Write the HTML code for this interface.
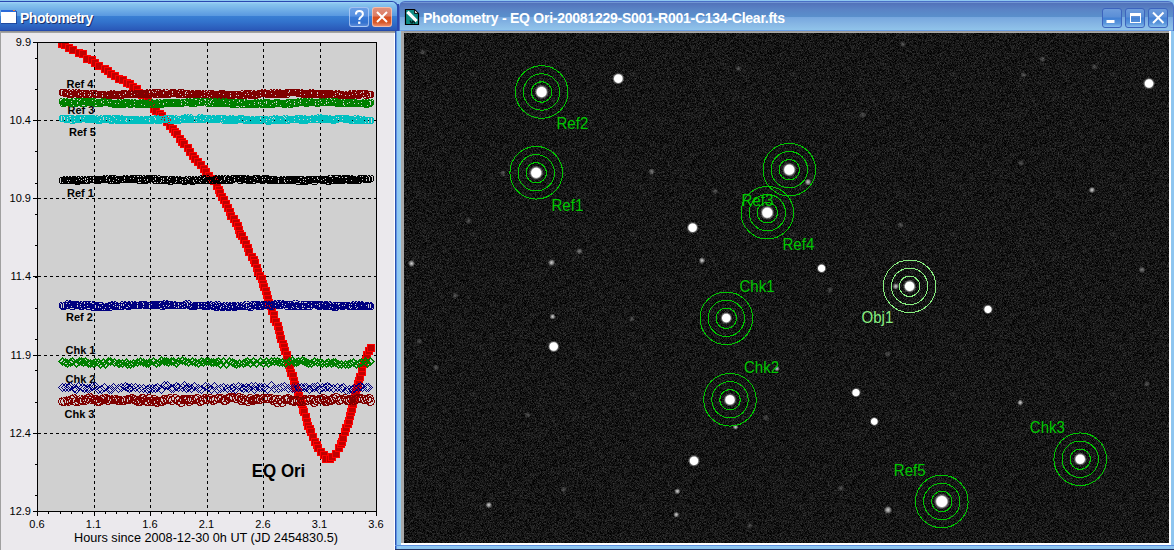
<!DOCTYPE html>
<html><head><meta charset="utf-8"><style>
html,body{margin:0;padding:0;}
body{width:1174px;height:550px;position:relative;overflow:hidden;background:#8ec8f0;font-family:"Liberation Sans",sans-serif;}
.abs{position:absolute;}
#rwin{left:395px;top:0;width:779px;height:550px;}
#rtitle{left:399px;top:1px;width:775px;height:30px;border-radius:6px 6px 0 0;box-sizing:border-box;border:1px solid #4a6ec6;border-bottom:none;
 background:linear-gradient(#90b8e8 0px,#5272ba 1px,#5a84c6 8px,#5a90cc 15px,#76a6de 15px,#86b6e4 22px,#90c4ea 28px,#6aa0e8 28px);}
#rborderL{left:395px;top:31px;width:6px;height:519px;background:linear-gradient(90deg,#2a52b0 0,#2a52b0 1px,#5f92e2 1px,#5f92e2 2px,#8ec6f0 2px,#94cdf2 6px);}
#ltitle{left:0;top:1px;width:398px;height:30px;border-radius:0 6px 0 0;box-sizing:border-box;border-top:1px solid #2a48b0;border-right:1px solid #2a48b0;
 background:linear-gradient(#a0d4f8 0px,#88c4ee 2px,#5898e0 14px,#3a80d4 14px,#3272cc 20px,#2a58b8 28px,#1e3ca0 29px);}
#lclient{left:0;top:31px;width:395px;height:519px;background:#ebe9ed;}
svg{position:absolute;left:0;top:0;}
.tb{position:absolute;width:20px;height:20px;box-sizing:border-box;border-radius:3px;}
</style></head><body>
<div id="rwin" class="abs" style="background:#8ec6f0"></div>
<div id="rtitle" class="abs"></div>
<div id="rborderL" class="abs"></div>
<div class="abs" style="left:401px;top:31px;width:768px;height:2px;background:linear-gradient(#909090,#b0b0b0)"></div>
<div class="abs" style="left:401px;top:31px;width:3px;height:512px;background:#a8a8a8"></div>
<div class="abs" style="left:1169px;top:31px;width:2px;height:514px;background:#fff"></div>
<div class="abs" style="left:1171px;top:31px;width:3px;height:519px;background:#8ec6f0"></div>
<div class="abs" style="left:401px;top:543px;width:770px;height:2px;background:#fff"></div>
<div class="abs" style="left:395px;top:545px;width:779px;height:1px;background:#5f92e2"></div>
<div class="abs" style="left:395px;top:549px;width:779px;height:1px;background:#203060"></div>
<div id="ltitle" class="abs"></div>
<div class="abs" style="left:397px;top:4px;width:2px;height:27px;background:#2a48b0"></div>
<div id="lclient" class="abs"></div>
<div class="abs" style="left:0;top:31px;width:395px;height:2px;background:linear-gradient(#8c8c8c,#acacac)"></div>
<div class="abs" style="left:0;top:31px;width:1px;height:519px;background:#a0a0a0"></div>
<div class="abs" style="left:394px;top:33px;width:1px;height:517px;background:#fff"></div>
<svg width="1174" height="550" viewBox="0 0 1174 550">
<defs><clipPath id="pc"><rect x="38" y="43" width="338" height="468"/></clipPath></defs>
<rect x="37.5" y="42.5" width="339" height="469" fill="#d0d0d0" stroke="#000" stroke-width="1" shape-rendering="crispEdges"/>
<path d="M94.5 43V511M150.5 43V511M207.5 43V511M263.5 43V511M320.5 43V511M38 120.5H376M38 198.5H376M38 276.5H376M38 355.5H376M38 433.5H376" stroke="#000" stroke-width="1" stroke-dasharray="3,3" fill="none"/>
<path d="M37.5 511v5M48.5 511v3M60.5 511v3M71.5 511v3M82.5 511v3M94.5 511v5M105.5 511v3M116.5 511v3M127.5 511v3M139.5 511v3M150.5 511v5M161.5 511v3M173.5 511v3M184.5 511v3M195.5 511v3M207.5 511v5M218.5 511v3M229.5 511v3M240.5 511v3M252.5 511v3M263.5 511v5M274.5 511v3M286.5 511v3M297.5 511v3M308.5 511v3M320.5 511v5M331.5 511v3M342.5 511v3M353.5 511v3M365.5 511v3M376.5 511v5M37 58.5h-2M37 89.5h-2M37 120.5h-2M37 151.5h-2M37 183.5h-2M37 214.5h-2M37 245.5h-2M37 277.5h-2M37 308.5h-2M37 339.5h-2M37 370.5h-2M37 402.5h-2M37 433.5h-2M37 464.5h-2M37 495.5h-2M37 42.5h-4M37 120.5h-4M37 198.5h-4M37 276.5h-4M37 355.5h-4M37 433.5h-4M37 511.5h-4" stroke="#000" stroke-width="1" fill="none"/>
<g font-family="Liberation Sans" font-size="11" fill="#000"><text x="31" y="46" text-anchor="end">9.9</text><text x="31" y="124" text-anchor="end">10.4</text><text x="31" y="202" text-anchor="end">10.9</text><text x="31" y="280" text-anchor="end">11.4</text><text x="31" y="359" text-anchor="end">11.9</text><text x="31" y="437" text-anchor="end">12.4</text><text x="31" y="515" text-anchor="end">12.9</text><text x="37" y="528" text-anchor="middle">0.6</text><text x="93.5" y="528" text-anchor="middle">1.1</text><text x="150" y="528" text-anchor="middle">1.6</text><text x="206.5" y="528" text-anchor="middle">2.1</text><text x="263" y="528" text-anchor="middle">2.6</text><text x="319.5" y="528" text-anchor="middle">3.1</text><text x="376" y="528" text-anchor="middle">3.6</text></g>
<text x="74" y="542" font-family="Liberation Sans" font-size="12" fill="#000" textLength="264" lengthAdjust="spacingAndGlyphs">Hours since 2008-12-30 0h UT (JD 2454830.5)</text>
<g font-family="Liberation Sans" font-weight="bold" font-size="11" fill="#000"><text x="66.5" y="88">Ref 4</text><text x="67.5" y="114">Ref 3</text><text x="69" y="136">Ref 5</text><text x="67" y="197">Ref 1</text><text x="66" y="321">Ref 2</text><text x="65.5" y="354">Chk 1</text><text x="65.5" y="383">Chk 2</text><text x="64.5" y="418">Chk 3</text></g>
<g stroke="#ff0000" stroke-width="1" fill="#c00000" clip-path="url(#pc)" shape-rendering="crispEdges"><rect x="58.5" y="40.5" width="7" height="7"/><rect x="61.5" y="41.5" width="7" height="7"/><rect x="65.5" y="44.5" width="7" height="7"/><rect x="69.5" y="46.5" width="7" height="7"/><rect x="75.5" y="49.5" width="7" height="7"/><rect x="79.5" y="50.5" width="7" height="7"/><rect x="83.5" y="55.5" width="7" height="7"/><rect x="88.5" y="56.5" width="7" height="7"/><rect x="91.5" y="59.5" width="7" height="7"/><rect x="95.5" y="62.5" width="7" height="7"/><rect x="101.5" y="65.5" width="7" height="7"/><rect x="104.5" y="67.5" width="7" height="7"/><rect x="107.5" y="70.5" width="7" height="7"/><rect x="111.5" y="72.5" width="7" height="7"/><rect x="115.5" y="75.5" width="7" height="7"/><rect x="119.5" y="76.5" width="7" height="7"/><rect x="123.5" y="79.5" width="7" height="7"/><rect x="126.5" y="80.5" width="7" height="7"/><rect x="129.5" y="83.5" width="7" height="7"/><rect x="133.5" y="85.5" width="7" height="7"/><rect x="135.5" y="89.5" width="7" height="7"/><rect x="138.5" y="91.5" width="7" height="7"/><rect x="142.5" y="94.5" width="7" height="7"/><rect x="144.5" y="97.5" width="7" height="7"/><rect x="148.5" y="100.5" width="7" height="7"/><rect x="150.5" y="105.5" width="7" height="7"/><rect x="152.5" y="107.5" width="7" height="7"/><rect x="156.5" y="110.5" width="7" height="7"/><rect x="158.5" y="112.5" width="7" height="7"/><rect x="160.5" y="115.5" width="7" height="7"/><rect x="163.5" y="118.5" width="7" height="7"/><rect x="166.5" y="122.5" width="7" height="7"/><rect x="169.5" y="125.5" width="7" height="7"/><rect x="171.5" y="128.5" width="7" height="7"/><rect x="173.5" y="130.5" width="7" height="7"/><rect x="176.5" y="135.5" width="7" height="7"/><rect x="178.5" y="138.5" width="7" height="7"/><rect x="180.5" y="140.5" width="7" height="7"/><rect x="184.5" y="144.5" width="7" height="7"/><rect x="186.5" y="148.5" width="7" height="7"/><rect x="189.5" y="152.5" width="7" height="7"/><rect x="191.5" y="155.5" width="7" height="7"/><rect x="194.5" y="158.5" width="7" height="7"/><rect x="197.5" y="161.5" width="7" height="7"/><rect x="200.5" y="165.5" width="7" height="7"/><rect x="202.5" y="168.5" width="7" height="7"/><rect x="205.5" y="172.5" width="7" height="7"/><rect x="208.5" y="175.5" width="7" height="7"/><rect x="210.5" y="177.5" width="7" height="7"/><rect x="213.5" y="182.5" width="7" height="7"/><rect x="215.5" y="186.5" width="7" height="7"/><rect x="216.5" y="189.5" width="7" height="7"/><rect x="218.5" y="193.5" width="7" height="7"/><rect x="220.5" y="196.5" width="7" height="7"/><rect x="222.5" y="200.5" width="7" height="7"/><rect x="224.5" y="204.5" width="7" height="7"/><rect x="226.5" y="208.5" width="7" height="7"/><rect x="227.5" y="212.5" width="7" height="7"/><rect x="230.5" y="215.5" width="7" height="7"/><rect x="232.5" y="219.5" width="7" height="7"/><rect x="234.5" y="222.5" width="7" height="7"/><rect x="235.5" y="226.5" width="7" height="7"/><rect x="236.5" y="230.5" width="7" height="7"/><rect x="238.5" y="232.5" width="7" height="7"/><rect x="240.5" y="236.5" width="7" height="7"/><rect x="242.5" y="240.5" width="7" height="7"/><rect x="244.5" y="244.5" width="7" height="7"/><rect x="245.5" y="248.5" width="7" height="7"/><rect x="248.5" y="253.5" width="7" height="7"/><rect x="250.5" y="256.5" width="7" height="7"/><rect x="251.5" y="259.5" width="7" height="7"/><rect x="253.5" y="264.5" width="7" height="7"/><rect x="254.5" y="268.5" width="7" height="7"/><rect x="256.5" y="272.5" width="7" height="7"/><rect x="258.5" y="275.5" width="7" height="7"/><rect x="259.5" y="280.5" width="7" height="7"/><rect x="260.5" y="283.5" width="7" height="7"/><rect x="262.5" y="287.5" width="7" height="7"/><rect x="263.5" y="291.5" width="7" height="7"/><rect x="264.5" y="295.5" width="7" height="7"/><rect x="265.5" y="299.5" width="7" height="7"/><rect x="267.5" y="302.5" width="7" height="7"/><rect x="268.5" y="307.5" width="7" height="7"/><rect x="270.5" y="311.5" width="7" height="7"/><rect x="270.5" y="315.5" width="7" height="7"/><rect x="272.5" y="318.5" width="7" height="7"/><rect x="274.5" y="322.5" width="7" height="7"/><rect x="275.5" y="326.5" width="7" height="7"/><rect x="276.5" y="331.5" width="7" height="7"/><rect x="277.5" y="335.5" width="7" height="7"/><rect x="279.5" y="340.5" width="7" height="7"/><rect x="280.5" y="343.5" width="7" height="7"/><rect x="281.5" y="347.5" width="7" height="7"/><rect x="283.5" y="351.5" width="7" height="7"/><rect x="283.5" y="355.5" width="7" height="7"/><rect x="285.5" y="361.5" width="7" height="7"/><rect x="286.5" y="364.5" width="7" height="7"/><rect x="287.5" y="369.5" width="7" height="7"/><rect x="289.5" y="372.5" width="7" height="7"/><rect x="290.5" y="377.5" width="7" height="7"/><rect x="291.5" y="381.5" width="7" height="7"/><rect x="292.5" y="384.5" width="7" height="7"/><rect x="294.5" y="388.5" width="7" height="7"/><rect x="295.5" y="392.5" width="7" height="7"/><rect x="297.5" y="396.5" width="7" height="7"/><rect x="298.5" y="400.5" width="7" height="7"/><rect x="299.5" y="406.5" width="7" height="7"/><rect x="300.5" y="408.5" width="7" height="7"/><rect x="302.5" y="413.5" width="7" height="7"/><rect x="303.5" y="418.5" width="7" height="7"/><rect x="304.5" y="422.5" width="7" height="7"/><rect x="306.5" y="425.5" width="7" height="7"/><rect x="307.5" y="428.5" width="7" height="7"/><rect x="309.5" y="433.5" width="7" height="7"/><rect x="311.5" y="438.5" width="7" height="7"/><rect x="313.5" y="441.5" width="7" height="7"/><rect x="314.5" y="444.5" width="7" height="7"/><rect x="317.5" y="448.5" width="7" height="7"/><rect x="320.5" y="451.5" width="7" height="7"/><rect x="322.5" y="455.5" width="7" height="7"/><rect x="326.5" y="455.5" width="7" height="7"/><rect x="328.5" y="453.5" width="7" height="7"/><rect x="332.5" y="450.5" width="7" height="7"/><rect x="335.5" y="444.5" width="7" height="7"/><rect x="337.5" y="440.5" width="7" height="7"/><rect x="338.5" y="438.5" width="7" height="7"/><rect x="339.5" y="434.5" width="7" height="7"/><rect x="341.5" y="428.5" width="7" height="7"/><rect x="342.5" y="424.5" width="7" height="7"/><rect x="344.5" y="420.5" width="7" height="7"/><rect x="345.5" y="417.5" width="7" height="7"/><rect x="346.5" y="412.5" width="7" height="7"/><rect x="347.5" y="408.5" width="7" height="7"/><rect x="348.5" y="405.5" width="7" height="7"/><rect x="349.5" y="400.5" width="7" height="7"/><rect x="350.5" y="396.5" width="7" height="7"/><rect x="351.5" y="393.5" width="7" height="7"/><rect x="352.5" y="389.5" width="7" height="7"/><rect x="353.5" y="384.5" width="7" height="7"/><rect x="354.5" y="380.5" width="7" height="7"/><rect x="355.5" y="377.5" width="7" height="7"/><rect x="356.5" y="373.5" width="7" height="7"/><rect x="358.5" y="368.5" width="7" height="7"/><rect x="358.5" y="364.5" width="7" height="7"/><rect x="360.5" y="360.5" width="7" height="7"/><rect x="362.5" y="356.5" width="7" height="7"/><rect x="363.5" y="351.5" width="7" height="7"/><rect x="365.5" y="347.5" width="7" height="7"/><rect x="367.5" y="344.5" width="7" height="7"/></g>
<path d="M62.5 89a3.5 3.5 0 1 0 0.1 0M63.5 89a3.5 3.5 0 1 0 0.1 0M65.5 90a3.5 3.5 0 1 0 0.1 0M66.5 90a3.5 3.5 0 1 0 0.1 0M66.5 90a3.5 3.5 0 1 0 0.1 0M67.5 89a3.5 3.5 0 1 0 0.1 0M69.5 91a3.5 3.5 0 1 0 0.1 0M69.5 90a3.5 3.5 0 1 0 0.1 0M71.5 91a3.5 3.5 0 1 0 0.1 0M72.5 90a3.5 3.5 0 1 0 0.1 0M74.5 89a3.5 3.5 0 1 0 0.1 0M76.5 90a3.5 3.5 0 1 0 0.1 0M77.5 89a3.5 3.5 0 1 0 0.1 0M78.5 91a3.5 3.5 0 1 0 0.1 0M79.5 91a3.5 3.5 0 1 0 0.1 0M80.5 90a3.5 3.5 0 1 0 0.1 0M82.5 90a3.5 3.5 0 1 0 0.1 0M82.5 90a3.5 3.5 0 1 0 0.1 0M84.5 90a3.5 3.5 0 1 0 0.1 0M85.5 91a3.5 3.5 0 1 0 0.1 0M86.5 90a3.5 3.5 0 1 0 0.1 0M88.5 91a3.5 3.5 0 1 0 0.1 0M89.5 91a3.5 3.5 0 1 0 0.1 0M90.5 92a3.5 3.5 0 1 0 0.1 0M92.5 90a3.5 3.5 0 1 0 0.1 0M94.5 90a3.5 3.5 0 1 0 0.1 0M95.5 91a3.5 3.5 0 1 0 0.1 0M96.5 91a3.5 3.5 0 1 0 0.1 0M96.5 91a3.5 3.5 0 1 0 0.1 0M98.5 91a3.5 3.5 0 1 0 0.1 0M100.5 91a3.5 3.5 0 1 0 0.1 0M101.5 91a3.5 3.5 0 1 0 0.1 0M103.5 91a3.5 3.5 0 1 0 0.1 0M104.5 92a3.5 3.5 0 1 0 0.1 0M106.5 91a3.5 3.5 0 1 0 0.1 0M106.5 92a3.5 3.5 0 1 0 0.1 0M108.5 92a3.5 3.5 0 1 0 0.1 0M109.5 91a3.5 3.5 0 1 0 0.1 0M111.5 91a3.5 3.5 0 1 0 0.1 0M111.5 91a3.5 3.5 0 1 0 0.1 0M112.5 90a3.5 3.5 0 1 0 0.1 0M113.5 92a3.5 3.5 0 1 0 0.1 0M114.5 91a3.5 3.5 0 1 0 0.1 0M115.5 92a3.5 3.5 0 1 0 0.1 0M116.5 91a3.5 3.5 0 1 0 0.1 0M118.5 92a3.5 3.5 0 1 0 0.1 0M119.5 92a3.5 3.5 0 1 0 0.1 0M120.5 91a3.5 3.5 0 1 0 0.1 0M121.5 92a3.5 3.5 0 1 0 0.1 0M123.5 90a3.5 3.5 0 1 0 0.1 0M124.5 90a3.5 3.5 0 1 0 0.1 0M125.5 91a3.5 3.5 0 1 0 0.1 0M127.5 90a3.5 3.5 0 1 0 0.1 0M127.5 91a3.5 3.5 0 1 0 0.1 0M129.4 91a3.5 3.5 0 1 0 0.1 0M130.4 91a3.5 3.5 0 1 0 0.1 0M132.4 91a3.5 3.5 0 1 0 0.1 0M133.4 90a3.5 3.5 0 1 0 0.1 0M135.4 91a3.5 3.5 0 1 0 0.1 0M137.4 91a3.5 3.5 0 1 0 0.1 0M138.4 90a3.5 3.5 0 1 0 0.1 0M139.4 91a3.5 3.5 0 1 0 0.1 0M139.4 90a3.5 3.5 0 1 0 0.1 0M140.4 90a3.5 3.5 0 1 0 0.1 0M142.4 90a3.5 3.5 0 1 0 0.1 0M142.4 90a3.5 3.5 0 1 0 0.1 0M143.4 90a3.5 3.5 0 1 0 0.1 0M144.4 91a3.5 3.5 0 1 0 0.1 0M145.4 90a3.5 3.5 0 1 0 0.1 0M147.4 90a3.5 3.5 0 1 0 0.1 0M148.4 89a3.5 3.5 0 1 0 0.1 0M149.4 91a3.5 3.5 0 1 0 0.1 0M151.4 90a3.5 3.5 0 1 0 0.1 0M151.4 89a3.5 3.5 0 1 0 0.1 0M153.4 90a3.5 3.5 0 1 0 0.1 0M154.4 89a3.5 3.5 0 1 0 0.1 0M155.4 91a3.5 3.5 0 1 0 0.1 0M156.4 89a3.5 3.5 0 1 0 0.1 0M158.4 89a3.5 3.5 0 1 0 0.1 0M159.4 91a3.5 3.5 0 1 0 0.1 0M161.4 90a3.5 3.5 0 1 0 0.1 0M162.4 90a3.5 3.5 0 1 0 0.1 0M163.4 91a3.5 3.5 0 1 0 0.1 0M164.4 91a3.5 3.5 0 1 0 0.1 0M165.4 89a3.5 3.5 0 1 0 0.1 0M167.4 91a3.5 3.5 0 1 0 0.1 0M168.4 91a3.5 3.5 0 1 0 0.1 0M170.4 90a3.5 3.5 0 1 0 0.1 0M171.4 90a3.5 3.5 0 1 0 0.1 0M172.4 89a3.5 3.5 0 1 0 0.1 0M173.4 89a3.5 3.5 0 1 0 0.1 0M174.4 90a3.5 3.5 0 1 0 0.1 0M176.4 90a3.5 3.5 0 1 0 0.1 0M178.4 91a3.5 3.5 0 1 0 0.1 0M179.4 90a3.5 3.5 0 1 0 0.1 0M180.4 89a3.5 3.5 0 1 0 0.1 0M181.4 89a3.5 3.5 0 1 0 0.1 0M183.4 91a3.5 3.5 0 1 0 0.1 0M185.4 90a3.5 3.5 0 1 0 0.1 0M186.4 91a3.5 3.5 0 1 0 0.1 0M187.4 90a3.5 3.5 0 1 0 0.1 0M189.4 91a3.5 3.5 0 1 0 0.1 0M190.4 90a3.5 3.5 0 1 0 0.1 0M191.4 91a3.5 3.5 0 1 0 0.1 0M192.4 91a3.5 3.5 0 1 0 0.1 0M194.4 90a3.5 3.5 0 1 0 0.1 0M195.4 91a3.5 3.5 0 1 0 0.1 0M197.4 90a3.5 3.5 0 1 0 0.1 0M198.4 90a3.5 3.5 0 1 0 0.1 0M199.4 91a3.5 3.5 0 1 0 0.1 0M200.4 91a3.5 3.5 0 1 0 0.1 0M202.4 91a3.5 3.5 0 1 0 0.1 0M203.4 91a3.5 3.5 0 1 0 0.1 0M204.4 90a3.5 3.5 0 1 0 0.1 0M206.4 91a3.5 3.5 0 1 0 0.1 0M207.4 92a3.5 3.5 0 1 0 0.1 0M209.4 92a3.5 3.5 0 1 0 0.1 0M210.4 90a3.5 3.5 0 1 0 0.1 0M211.4 90a3.5 3.5 0 1 0 0.1 0M212.4 91a3.5 3.5 0 1 0 0.1 0M213.4 91a3.5 3.5 0 1 0 0.1 0M214.4 92a3.5 3.5 0 1 0 0.1 0M215.4 91a3.5 3.5 0 1 0 0.1 0M217.4 92a3.5 3.5 0 1 0 0.1 0M218.4 92a3.5 3.5 0 1 0 0.1 0M219.4 91a3.5 3.5 0 1 0 0.1 0M221.4 90a3.5 3.5 0 1 0 0.1 0M222.4 90a3.5 3.5 0 1 0 0.1 0M223.4 92a3.5 3.5 0 1 0 0.1 0M224.4 91a3.5 3.5 0 1 0 0.1 0M225.4 91a3.5 3.5 0 1 0 0.1 0M226.4 91a3.5 3.5 0 1 0 0.1 0M228.4 92a3.5 3.5 0 1 0 0.1 0M228.4 91a3.5 3.5 0 1 0 0.1 0M229.4 91a3.5 3.5 0 1 0 0.1 0M231.4 91a3.5 3.5 0 1 0 0.1 0M232.4 92a3.5 3.5 0 1 0 0.1 0M234.4 91a3.5 3.5 0 1 0 0.1 0M236.4 91a3.5 3.5 0 1 0 0.1 0M237.4 91a3.5 3.5 0 1 0 0.1 0M238.4 91a3.5 3.5 0 1 0 0.1 0M239.4 92a3.5 3.5 0 1 0 0.1 0M241.4 92a3.5 3.5 0 1 0 0.1 0M243.4 90a3.5 3.5 0 1 0 0.1 0M244.4 92a3.5 3.5 0 1 0 0.1 0M246.4 90a3.5 3.5 0 1 0 0.1 0M247.4 91a3.5 3.5 0 1 0 0.1 0M247.4 90a3.5 3.5 0 1 0 0.1 0M248.4 91a3.5 3.5 0 1 0 0.1 0M250.4 92a3.5 3.5 0 1 0 0.1 0M251.4 91a3.5 3.5 0 1 0 0.1 0M252.4 90a3.5 3.5 0 1 0 0.1 0M254.4 92a3.5 3.5 0 1 0 0.1 0M255.4 92a3.5 3.5 0 1 0 0.1 0M256.4 91a3.5 3.5 0 1 0 0.1 0M258.4 91a3.5 3.5 0 1 0 0.1 0M259.4 90a3.5 3.5 0 1 0 0.1 0M260.4 90a3.5 3.5 0 1 0 0.1 0M261.4 90a3.5 3.5 0 1 0 0.1 0M263.4 89a3.5 3.5 0 1 0 0.1 0M264.4 90a3.5 3.5 0 1 0 0.1 0M265.4 90a3.5 3.5 0 1 0 0.1 0M266.4 90a3.5 3.5 0 1 0 0.1 0M267.4 91a3.5 3.5 0 1 0 0.1 0M269.4 91a3.5 3.5 0 1 0 0.1 0M270.4 90a3.5 3.5 0 1 0 0.1 0M271.4 91a3.5 3.5 0 1 0 0.1 0M272.4 89a3.5 3.5 0 1 0 0.1 0M273.4 91a3.5 3.5 0 1 0 0.1 0M274.4 90a3.5 3.5 0 1 0 0.1 0M275.4 91a3.5 3.5 0 1 0 0.1 0M277.4 90a3.5 3.5 0 1 0 0.1 0M278.4 89a3.5 3.5 0 1 0 0.1 0M279.4 90a3.5 3.5 0 1 0 0.1 0M280.4 91a3.5 3.5 0 1 0 0.1 0M281.4 91a3.5 3.5 0 1 0 0.1 0M282.4 91a3.5 3.5 0 1 0 0.1 0M283.4 91a3.5 3.5 0 1 0 0.1 0M284.4 90a3.5 3.5 0 1 0 0.1 0M286.4 91a3.5 3.5 0 1 0 0.1 0M287.4 89a3.5 3.5 0 1 0 0.1 0M288.4 89a3.5 3.5 0 1 0 0.1 0M289.4 89a3.5 3.5 0 1 0 0.1 0M290.4 89a3.5 3.5 0 1 0 0.1 0M291.4 89a3.5 3.5 0 1 0 0.1 0M293.4 89a3.5 3.5 0 1 0 0.1 0M294.4 89a3.5 3.5 0 1 0 0.1 0M295.4 89a3.5 3.5 0 1 0 0.1 0M296.4 89a3.5 3.5 0 1 0 0.1 0M298.4 90a3.5 3.5 0 1 0 0.1 0M299.4 90a3.5 3.5 0 1 0 0.1 0M300.4 89a3.5 3.5 0 1 0 0.1 0M302.4 90a3.5 3.5 0 1 0 0.1 0M303.4 91a3.5 3.5 0 1 0 0.1 0M304.4 90a3.5 3.5 0 1 0 0.1 0M306.4 91a3.5 3.5 0 1 0 0.1 0M307.4 91a3.5 3.5 0 1 0 0.1 0M309.4 90a3.5 3.5 0 1 0 0.1 0M310.4 90a3.5 3.5 0 1 0 0.1 0M311.4 89a3.5 3.5 0 1 0 0.1 0M311.4 91a3.5 3.5 0 1 0 0.1 0M312.4 90a3.5 3.5 0 1 0 0.1 0M313.4 91a3.5 3.5 0 1 0 0.1 0M315.4 91a3.5 3.5 0 1 0 0.1 0M316.4 90a3.5 3.5 0 1 0 0.1 0M317.4 90a3.5 3.5 0 1 0 0.1 0M318.4 90a3.5 3.5 0 1 0 0.1 0M319.4 91a3.5 3.5 0 1 0 0.1 0M321.4 91a3.5 3.5 0 1 0 0.1 0M322.4 92a3.5 3.5 0 1 0 0.1 0M323.4 90a3.5 3.5 0 1 0 0.1 0M324.4 90a3.5 3.5 0 1 0 0.1 0M325.4 91a3.5 3.5 0 1 0 0.1 0M326.4 91a3.5 3.5 0 1 0 0.1 0M327.4 90a3.5 3.5 0 1 0 0.1 0M328.4 90a3.5 3.5 0 1 0 0.1 0M329.4 90a3.5 3.5 0 1 0 0.1 0M330.4 90a3.5 3.5 0 1 0 0.1 0M331.4 91a3.5 3.5 0 1 0 0.1 0M333.4 91a3.5 3.5 0 1 0 0.1 0M334.4 92a3.5 3.5 0 1 0 0.1 0M335.4 91a3.5 3.5 0 1 0 0.1 0M337.4 90a3.5 3.5 0 1 0 0.1 0M339.4 91a3.5 3.5 0 1 0 0.1 0M340.4 92a3.5 3.5 0 1 0 0.1 0M341.4 91a3.5 3.5 0 1 0 0.1 0M343.4 92a3.5 3.5 0 1 0 0.1 0M344.4 91a3.5 3.5 0 1 0 0.1 0M345.4 92a3.5 3.5 0 1 0 0.1 0M347.4 92a3.5 3.5 0 1 0 0.1 0M348.4 92a3.5 3.5 0 1 0 0.1 0M350.4 92a3.5 3.5 0 1 0 0.1 0M351.4 90a3.5 3.5 0 1 0 0.1 0M351.4 91a3.5 3.5 0 1 0 0.1 0M352.4 92a3.5 3.5 0 1 0 0.1 0M354.4 91a3.5 3.5 0 1 0 0.1 0M355.4 91a3.5 3.5 0 1 0 0.1 0M356.4 90a3.5 3.5 0 1 0 0.1 0M358.4 92a3.5 3.5 0 1 0 0.1 0M359.4 91a3.5 3.5 0 1 0 0.1 0M361.4 90a3.5 3.5 0 1 0 0.1 0M362.4 90a3.5 3.5 0 1 0 0.1 0M363.4 90a3.5 3.5 0 1 0 0.1 0M365.4 90a3.5 3.5 0 1 0 0.1 0M366.4 92a3.5 3.5 0 1 0 0.1 0M368.4 91a3.5 3.5 0 1 0 0.1 0M369.4 91a3.5 3.5 0 1 0 0.1 0M370.4 91a3.5 3.5 0 1 0 0.1 0" stroke="#800000" stroke-width="1" fill="none" shape-rendering="crispEdges"/>
<path d="M62.5 98a3.5 3.5 0 1 0 0.1 0M63.5 100a3.5 3.5 0 1 0 0.1 0M64.5 99a3.5 3.5 0 1 0 0.1 0M65.5 98a3.5 3.5 0 1 0 0.1 0M66.5 99a3.5 3.5 0 1 0 0.1 0M67.5 99a3.5 3.5 0 1 0 0.1 0M69.5 99a3.5 3.5 0 1 0 0.1 0M70.5 99a3.5 3.5 0 1 0 0.1 0M71.5 100a3.5 3.5 0 1 0 0.1 0M72.5 100a3.5 3.5 0 1 0 0.1 0M73.5 98a3.5 3.5 0 1 0 0.1 0M75.5 100a3.5 3.5 0 1 0 0.1 0M77.5 99a3.5 3.5 0 1 0 0.1 0M78.5 98a3.5 3.5 0 1 0 0.1 0M79.5 98a3.5 3.5 0 1 0 0.1 0M81.5 98a3.5 3.5 0 1 0 0.1 0M82.5 100a3.5 3.5 0 1 0 0.1 0M83.5 100a3.5 3.5 0 1 0 0.1 0M84.5 100a3.5 3.5 0 1 0 0.1 0M86.5 98a3.5 3.5 0 1 0 0.1 0M88.5 99a3.5 3.5 0 1 0 0.1 0M88.5 98a3.5 3.5 0 1 0 0.1 0M90.5 99a3.5 3.5 0 1 0 0.1 0M91.5 98a3.5 3.5 0 1 0 0.1 0M92.5 99a3.5 3.5 0 1 0 0.1 0M93.5 98a3.5 3.5 0 1 0 0.1 0M95.5 100a3.5 3.5 0 1 0 0.1 0M96.5 100a3.5 3.5 0 1 0 0.1 0M97.5 100a3.5 3.5 0 1 0 0.1 0M99.5 99a3.5 3.5 0 1 0 0.1 0M100.5 100a3.5 3.5 0 1 0 0.1 0M101.5 99a3.5 3.5 0 1 0 0.1 0M102.5 99a3.5 3.5 0 1 0 0.1 0M103.5 98a3.5 3.5 0 1 0 0.1 0M105.5 99a3.5 3.5 0 1 0 0.1 0M107.5 99a3.5 3.5 0 1 0 0.1 0M108.5 99a3.5 3.5 0 1 0 0.1 0M109.5 99a3.5 3.5 0 1 0 0.1 0M110.5 100a3.5 3.5 0 1 0 0.1 0M112.5 100a3.5 3.5 0 1 0 0.1 0M114.5 101a3.5 3.5 0 1 0 0.1 0M115.5 100a3.5 3.5 0 1 0 0.1 0M116.5 100a3.5 3.5 0 1 0 0.1 0M117.5 100a3.5 3.5 0 1 0 0.1 0M119.5 99a3.5 3.5 0 1 0 0.1 0M119.5 101a3.5 3.5 0 1 0 0.1 0M120.5 100a3.5 3.5 0 1 0 0.1 0M122.5 99a3.5 3.5 0 1 0 0.1 0M123.5 101a3.5 3.5 0 1 0 0.1 0M124.5 100a3.5 3.5 0 1 0 0.1 0M125.5 100a3.5 3.5 0 1 0 0.1 0M126.5 99a3.5 3.5 0 1 0 0.1 0M127.5 99a3.5 3.5 0 1 0 0.1 0M129.4 100a3.5 3.5 0 1 0 0.1 0M130.4 101a3.5 3.5 0 1 0 0.1 0M132.4 100a3.5 3.5 0 1 0 0.1 0M133.4 99a3.5 3.5 0 1 0 0.1 0M134.4 100a3.5 3.5 0 1 0 0.1 0M135.4 100a3.5 3.5 0 1 0 0.1 0M136.4 100a3.5 3.5 0 1 0 0.1 0M137.4 101a3.5 3.5 0 1 0 0.1 0M139.4 100a3.5 3.5 0 1 0 0.1 0M140.4 100a3.5 3.5 0 1 0 0.1 0M141.4 99a3.5 3.5 0 1 0 0.1 0M142.4 101a3.5 3.5 0 1 0 0.1 0M143.4 100a3.5 3.5 0 1 0 0.1 0M144.4 101a3.5 3.5 0 1 0 0.1 0M145.4 100a3.5 3.5 0 1 0 0.1 0M146.4 100a3.5 3.5 0 1 0 0.1 0M148.4 101a3.5 3.5 0 1 0 0.1 0M149.4 101a3.5 3.5 0 1 0 0.1 0M150.4 99a3.5 3.5 0 1 0 0.1 0M152.4 101a3.5 3.5 0 1 0 0.1 0M153.4 100a3.5 3.5 0 1 0 0.1 0M154.4 100a3.5 3.5 0 1 0 0.1 0M155.4 101a3.5 3.5 0 1 0 0.1 0M157.4 101a3.5 3.5 0 1 0 0.1 0M158.4 99a3.5 3.5 0 1 0 0.1 0M159.4 100a3.5 3.5 0 1 0 0.1 0M161.4 101a3.5 3.5 0 1 0 0.1 0M162.4 100a3.5 3.5 0 1 0 0.1 0M164.4 100a3.5 3.5 0 1 0 0.1 0M165.4 99a3.5 3.5 0 1 0 0.1 0M167.4 99a3.5 3.5 0 1 0 0.1 0M168.4 100a3.5 3.5 0 1 0 0.1 0M169.4 99a3.5 3.5 0 1 0 0.1 0M171.4 100a3.5 3.5 0 1 0 0.1 0M172.4 99a3.5 3.5 0 1 0 0.1 0M173.4 99a3.5 3.5 0 1 0 0.1 0M174.4 99a3.5 3.5 0 1 0 0.1 0M175.4 100a3.5 3.5 0 1 0 0.1 0M176.4 99a3.5 3.5 0 1 0 0.1 0M177.4 100a3.5 3.5 0 1 0 0.1 0M179.4 100a3.5 3.5 0 1 0 0.1 0M180.4 99a3.5 3.5 0 1 0 0.1 0M181.4 100a3.5 3.5 0 1 0 0.1 0M183.4 99a3.5 3.5 0 1 0 0.1 0M183.4 99a3.5 3.5 0 1 0 0.1 0M185.4 99a3.5 3.5 0 1 0 0.1 0M186.4 99a3.5 3.5 0 1 0 0.1 0M188.4 98a3.5 3.5 0 1 0 0.1 0M189.4 99a3.5 3.5 0 1 0 0.1 0M190.4 99a3.5 3.5 0 1 0 0.1 0M191.4 100a3.5 3.5 0 1 0 0.1 0M192.4 99a3.5 3.5 0 1 0 0.1 0M193.4 100a3.5 3.5 0 1 0 0.1 0M194.4 100a3.5 3.5 0 1 0 0.1 0M195.4 98a3.5 3.5 0 1 0 0.1 0M197.4 98a3.5 3.5 0 1 0 0.1 0M199.4 99a3.5 3.5 0 1 0 0.1 0M200.4 98a3.5 3.5 0 1 0 0.1 0M201.4 99a3.5 3.5 0 1 0 0.1 0M203.4 98a3.5 3.5 0 1 0 0.1 0M204.4 98a3.5 3.5 0 1 0 0.1 0M206.4 98a3.5 3.5 0 1 0 0.1 0M206.4 98a3.5 3.5 0 1 0 0.1 0M208.4 100a3.5 3.5 0 1 0 0.1 0M209.4 99a3.5 3.5 0 1 0 0.1 0M211.4 100a3.5 3.5 0 1 0 0.1 0M212.4 98a3.5 3.5 0 1 0 0.1 0M214.4 100a3.5 3.5 0 1 0 0.1 0M215.4 99a3.5 3.5 0 1 0 0.1 0M216.4 99a3.5 3.5 0 1 0 0.1 0M217.4 98a3.5 3.5 0 1 0 0.1 0M218.4 99a3.5 3.5 0 1 0 0.1 0M219.4 100a3.5 3.5 0 1 0 0.1 0M220.4 100a3.5 3.5 0 1 0 0.1 0M221.4 99a3.5 3.5 0 1 0 0.1 0M223.4 100a3.5 3.5 0 1 0 0.1 0M224.4 98a3.5 3.5 0 1 0 0.1 0M225.4 99a3.5 3.5 0 1 0 0.1 0M227.4 99a3.5 3.5 0 1 0 0.1 0M228.4 100a3.5 3.5 0 1 0 0.1 0M229.4 99a3.5 3.5 0 1 0 0.1 0M230.4 100a3.5 3.5 0 1 0 0.1 0M231.4 99a3.5 3.5 0 1 0 0.1 0M232.4 101a3.5 3.5 0 1 0 0.1 0M233.4 100a3.5 3.5 0 1 0 0.1 0M235.4 99a3.5 3.5 0 1 0 0.1 0M236.4 101a3.5 3.5 0 1 0 0.1 0M237.4 99a3.5 3.5 0 1 0 0.1 0M239.4 99a3.5 3.5 0 1 0 0.1 0M240.4 99a3.5 3.5 0 1 0 0.1 0M242.4 101a3.5 3.5 0 1 0 0.1 0M243.4 101a3.5 3.5 0 1 0 0.1 0M244.4 99a3.5 3.5 0 1 0 0.1 0M245.4 101a3.5 3.5 0 1 0 0.1 0M247.4 100a3.5 3.5 0 1 0 0.1 0M248.4 100a3.5 3.5 0 1 0 0.1 0M249.4 101a3.5 3.5 0 1 0 0.1 0M250.4 101a3.5 3.5 0 1 0 0.1 0M252.4 101a3.5 3.5 0 1 0 0.1 0M253.4 100a3.5 3.5 0 1 0 0.1 0M254.4 100a3.5 3.5 0 1 0 0.1 0M256.4 101a3.5 3.5 0 1 0 0.1 0M256.4 99a3.5 3.5 0 1 0 0.1 0M258.4 100a3.5 3.5 0 1 0 0.1 0M259.4 99a3.5 3.5 0 1 0 0.1 0M260.4 100a3.5 3.5 0 1 0 0.1 0M262.4 101a3.5 3.5 0 1 0 0.1 0M264.4 100a3.5 3.5 0 1 0 0.1 0M265.4 99a3.5 3.5 0 1 0 0.1 0M266.4 101a3.5 3.5 0 1 0 0.1 0M267.4 99a3.5 3.5 0 1 0 0.1 0M268.4 100a3.5 3.5 0 1 0 0.1 0M270.4 101a3.5 3.5 0 1 0 0.1 0M272.4 100a3.5 3.5 0 1 0 0.1 0M272.4 101a3.5 3.5 0 1 0 0.1 0M274.4 100a3.5 3.5 0 1 0 0.1 0M275.4 100a3.5 3.5 0 1 0 0.1 0M276.4 99a3.5 3.5 0 1 0 0.1 0M277.4 99a3.5 3.5 0 1 0 0.1 0M278.4 100a3.5 3.5 0 1 0 0.1 0M280.4 100a3.5 3.5 0 1 0 0.1 0M281.4 100a3.5 3.5 0 1 0 0.1 0M282.4 100a3.5 3.5 0 1 0 0.1 0M284.4 101a3.5 3.5 0 1 0 0.1 0M285.4 100a3.5 3.5 0 1 0 0.1 0M286.4 100a3.5 3.5 0 1 0 0.1 0M288.4 99a3.5 3.5 0 1 0 0.1 0M289.4 99a3.5 3.5 0 1 0 0.1 0M290.4 101a3.5 3.5 0 1 0 0.1 0M292.4 100a3.5 3.5 0 1 0 0.1 0M293.4 100a3.5 3.5 0 1 0 0.1 0M294.4 99a3.5 3.5 0 1 0 0.1 0M296.4 100a3.5 3.5 0 1 0 0.1 0M296.4 99a3.5 3.5 0 1 0 0.1 0M298.4 99a3.5 3.5 0 1 0 0.1 0M299.4 98a3.5 3.5 0 1 0 0.1 0M300.4 99a3.5 3.5 0 1 0 0.1 0M301.4 99a3.5 3.5 0 1 0 0.1 0M302.4 98a3.5 3.5 0 1 0 0.1 0M304.4 99a3.5 3.5 0 1 0 0.1 0M305.4 99a3.5 3.5 0 1 0 0.1 0M306.4 100a3.5 3.5 0 1 0 0.1 0M307.4 98a3.5 3.5 0 1 0 0.1 0M308.4 99a3.5 3.5 0 1 0 0.1 0M309.4 99a3.5 3.5 0 1 0 0.1 0M310.4 98a3.5 3.5 0 1 0 0.1 0M311.4 99a3.5 3.5 0 1 0 0.1 0M313.4 99a3.5 3.5 0 1 0 0.1 0M314.4 99a3.5 3.5 0 1 0 0.1 0M316.4 99a3.5 3.5 0 1 0 0.1 0M317.4 100a3.5 3.5 0 1 0 0.1 0M319.4 99a3.5 3.5 0 1 0 0.1 0M320.4 99a3.5 3.5 0 1 0 0.1 0M321.4 98a3.5 3.5 0 1 0 0.1 0M322.4 99a3.5 3.5 0 1 0 0.1 0M324.4 99a3.5 3.5 0 1 0 0.1 0M326.4 99a3.5 3.5 0 1 0 0.1 0M327.4 98a3.5 3.5 0 1 0 0.1 0M328.4 99a3.5 3.5 0 1 0 0.1 0M330.4 98a3.5 3.5 0 1 0 0.1 0M331.4 99a3.5 3.5 0 1 0 0.1 0M333.4 98a3.5 3.5 0 1 0 0.1 0M334.4 99a3.5 3.5 0 1 0 0.1 0M335.4 98a3.5 3.5 0 1 0 0.1 0M337.4 100a3.5 3.5 0 1 0 0.1 0M338.4 99a3.5 3.5 0 1 0 0.1 0M339.4 100a3.5 3.5 0 1 0 0.1 0M341.4 99a3.5 3.5 0 1 0 0.1 0M342.4 100a3.5 3.5 0 1 0 0.1 0M343.4 100a3.5 3.5 0 1 0 0.1 0M345.4 100a3.5 3.5 0 1 0 0.1 0M345.4 100a3.5 3.5 0 1 0 0.1 0M347.4 99a3.5 3.5 0 1 0 0.1 0M348.4 100a3.5 3.5 0 1 0 0.1 0M349.4 99a3.5 3.5 0 1 0 0.1 0M350.4 100a3.5 3.5 0 1 0 0.1 0M352.4 99a3.5 3.5 0 1 0 0.1 0M353.4 100a3.5 3.5 0 1 0 0.1 0M354.4 99a3.5 3.5 0 1 0 0.1 0M356.4 100a3.5 3.5 0 1 0 0.1 0M356.4 100a3.5 3.5 0 1 0 0.1 0M357.4 100a3.5 3.5 0 1 0 0.1 0M359.4 100a3.5 3.5 0 1 0 0.1 0M360.4 100a3.5 3.5 0 1 0 0.1 0M361.4 100a3.5 3.5 0 1 0 0.1 0M363.4 100a3.5 3.5 0 1 0 0.1 0M364.4 99a3.5 3.5 0 1 0 0.1 0M365.4 100a3.5 3.5 0 1 0 0.1 0M366.4 101a3.5 3.5 0 1 0 0.1 0M368.4 100a3.5 3.5 0 1 0 0.1 0M369.4 100a3.5 3.5 0 1 0 0.1 0M370.4 99a3.5 3.5 0 1 0 0.1 0" stroke="#008000" stroke-width="1" fill="none" shape-rendering="crispEdges"/>
<path d="M62.5 115a3.5 3.5 0 1 0 0.1 0M63.5 115a3.5 3.5 0 1 0 0.1 0M65.5 115a3.5 3.5 0 1 0 0.1 0M66.5 116a3.5 3.5 0 1 0 0.1 0M68.5 115a3.5 3.5 0 1 0 0.1 0M69.5 115a3.5 3.5 0 1 0 0.1 0M71.5 115a3.5 3.5 0 1 0 0.1 0M72.5 117a3.5 3.5 0 1 0 0.1 0M74.5 116a3.5 3.5 0 1 0 0.1 0M75.5 116a3.5 3.5 0 1 0 0.1 0M76.5 116a3.5 3.5 0 1 0 0.1 0M78.5 115a3.5 3.5 0 1 0 0.1 0M79.5 116a3.5 3.5 0 1 0 0.1 0M80.5 115a3.5 3.5 0 1 0 0.1 0M82.5 115a3.5 3.5 0 1 0 0.1 0M84.5 115a3.5 3.5 0 1 0 0.1 0M85.5 115a3.5 3.5 0 1 0 0.1 0M87.5 116a3.5 3.5 0 1 0 0.1 0M88.5 115a3.5 3.5 0 1 0 0.1 0M89.5 115a3.5 3.5 0 1 0 0.1 0M90.5 115a3.5 3.5 0 1 0 0.1 0M91.5 116a3.5 3.5 0 1 0 0.1 0M92.5 116a3.5 3.5 0 1 0 0.1 0M93.5 116a3.5 3.5 0 1 0 0.1 0M94.5 116a3.5 3.5 0 1 0 0.1 0M95.5 115a3.5 3.5 0 1 0 0.1 0M97.5 116a3.5 3.5 0 1 0 0.1 0M98.5 117a3.5 3.5 0 1 0 0.1 0M99.5 117a3.5 3.5 0 1 0 0.1 0M101.5 116a3.5 3.5 0 1 0 0.1 0M102.5 115a3.5 3.5 0 1 0 0.1 0M104.5 116a3.5 3.5 0 1 0 0.1 0M105.5 116a3.5 3.5 0 1 0 0.1 0M107.5 115a3.5 3.5 0 1 0 0.1 0M108.5 115a3.5 3.5 0 1 0 0.1 0M110.5 116a3.5 3.5 0 1 0 0.1 0M111.5 117a3.5 3.5 0 1 0 0.1 0M113.5 116a3.5 3.5 0 1 0 0.1 0M114.5 115a3.5 3.5 0 1 0 0.1 0M115.5 115a3.5 3.5 0 1 0 0.1 0M116.5 116a3.5 3.5 0 1 0 0.1 0M117.5 117a3.5 3.5 0 1 0 0.1 0M118.5 116a3.5 3.5 0 1 0 0.1 0M120.5 115a3.5 3.5 0 1 0 0.1 0M120.5 116a3.5 3.5 0 1 0 0.1 0M121.5 116a3.5 3.5 0 1 0 0.1 0M122.5 117a3.5 3.5 0 1 0 0.1 0M124.5 116a3.5 3.5 0 1 0 0.1 0M125.5 116a3.5 3.5 0 1 0 0.1 0M126.5 117a3.5 3.5 0 1 0 0.1 0M127.5 116a3.5 3.5 0 1 0 0.1 0M128.4 117a3.5 3.5 0 1 0 0.1 0M130.4 117a3.5 3.5 0 1 0 0.1 0M131.4 116a3.5 3.5 0 1 0 0.1 0M132.4 117a3.5 3.5 0 1 0 0.1 0M133.4 116a3.5 3.5 0 1 0 0.1 0M135.4 116a3.5 3.5 0 1 0 0.1 0M136.4 117a3.5 3.5 0 1 0 0.1 0M137.4 117a3.5 3.5 0 1 0 0.1 0M138.4 117a3.5 3.5 0 1 0 0.1 0M139.4 116a3.5 3.5 0 1 0 0.1 0M140.4 117a3.5 3.5 0 1 0 0.1 0M141.4 117a3.5 3.5 0 1 0 0.1 0M143.4 116a3.5 3.5 0 1 0 0.1 0M144.4 117a3.5 3.5 0 1 0 0.1 0M145.4 117a3.5 3.5 0 1 0 0.1 0M147.4 116a3.5 3.5 0 1 0 0.1 0M148.4 116a3.5 3.5 0 1 0 0.1 0M149.4 117a3.5 3.5 0 1 0 0.1 0M150.4 117a3.5 3.5 0 1 0 0.1 0M151.4 117a3.5 3.5 0 1 0 0.1 0M153.4 116a3.5 3.5 0 1 0 0.1 0M154.4 116a3.5 3.5 0 1 0 0.1 0M155.4 116a3.5 3.5 0 1 0 0.1 0M156.4 115a3.5 3.5 0 1 0 0.1 0M157.4 117a3.5 3.5 0 1 0 0.1 0M159.4 117a3.5 3.5 0 1 0 0.1 0M160.4 116a3.5 3.5 0 1 0 0.1 0M162.4 116a3.5 3.5 0 1 0 0.1 0M163.4 116a3.5 3.5 0 1 0 0.1 0M164.4 116a3.5 3.5 0 1 0 0.1 0M166.4 115a3.5 3.5 0 1 0 0.1 0M168.4 115a3.5 3.5 0 1 0 0.1 0M169.4 115a3.5 3.5 0 1 0 0.1 0M170.4 117a3.5 3.5 0 1 0 0.1 0M172.4 116a3.5 3.5 0 1 0 0.1 0M174.4 115a3.5 3.5 0 1 0 0.1 0M175.4 117a3.5 3.5 0 1 0 0.1 0M176.4 116a3.5 3.5 0 1 0 0.1 0M178.4 117a3.5 3.5 0 1 0 0.1 0M179.4 116a3.5 3.5 0 1 0 0.1 0M180.4 116a3.5 3.5 0 1 0 0.1 0M182.4 116a3.5 3.5 0 1 0 0.1 0M183.4 115a3.5 3.5 0 1 0 0.1 0M184.4 116a3.5 3.5 0 1 0 0.1 0M185.4 116a3.5 3.5 0 1 0 0.1 0M186.4 114a3.5 3.5 0 1 0 0.1 0M187.4 116a3.5 3.5 0 1 0 0.1 0M188.4 115a3.5 3.5 0 1 0 0.1 0M189.4 114a3.5 3.5 0 1 0 0.1 0M190.4 116a3.5 3.5 0 1 0 0.1 0M192.4 116a3.5 3.5 0 1 0 0.1 0M192.4 116a3.5 3.5 0 1 0 0.1 0M194.4 116a3.5 3.5 0 1 0 0.1 0M195.4 116a3.5 3.5 0 1 0 0.1 0M196.4 116a3.5 3.5 0 1 0 0.1 0M198.4 116a3.5 3.5 0 1 0 0.1 0M199.4 115a3.5 3.5 0 1 0 0.1 0M200.4 114a3.5 3.5 0 1 0 0.1 0M201.4 116a3.5 3.5 0 1 0 0.1 0M203.4 116a3.5 3.5 0 1 0 0.1 0M204.4 115a3.5 3.5 0 1 0 0.1 0M205.4 115a3.5 3.5 0 1 0 0.1 0M207.4 115a3.5 3.5 0 1 0 0.1 0M208.4 115a3.5 3.5 0 1 0 0.1 0M208.4 115a3.5 3.5 0 1 0 0.1 0M210.4 116a3.5 3.5 0 1 0 0.1 0M211.4 115a3.5 3.5 0 1 0 0.1 0M212.4 116a3.5 3.5 0 1 0 0.1 0M214.4 116a3.5 3.5 0 1 0 0.1 0M215.4 115a3.5 3.5 0 1 0 0.1 0M216.4 116a3.5 3.5 0 1 0 0.1 0M217.4 116a3.5 3.5 0 1 0 0.1 0M219.4 115a3.5 3.5 0 1 0 0.1 0M220.4 115a3.5 3.5 0 1 0 0.1 0M222.4 115a3.5 3.5 0 1 0 0.1 0M223.4 115a3.5 3.5 0 1 0 0.1 0M224.4 117a3.5 3.5 0 1 0 0.1 0M225.4 116a3.5 3.5 0 1 0 0.1 0M226.4 117a3.5 3.5 0 1 0 0.1 0M227.4 116a3.5 3.5 0 1 0 0.1 0M229.4 117a3.5 3.5 0 1 0 0.1 0M230.4 117a3.5 3.5 0 1 0 0.1 0M231.4 115a3.5 3.5 0 1 0 0.1 0M232.4 116a3.5 3.5 0 1 0 0.1 0M233.4 116a3.5 3.5 0 1 0 0.1 0M234.4 117a3.5 3.5 0 1 0 0.1 0M235.4 117a3.5 3.5 0 1 0 0.1 0M237.4 116a3.5 3.5 0 1 0 0.1 0M238.4 116a3.5 3.5 0 1 0 0.1 0M240.4 115a3.5 3.5 0 1 0 0.1 0M241.4 115a3.5 3.5 0 1 0 0.1 0M242.4 116a3.5 3.5 0 1 0 0.1 0M244.4 116a3.5 3.5 0 1 0 0.1 0M245.4 117a3.5 3.5 0 1 0 0.1 0M246.4 116a3.5 3.5 0 1 0 0.1 0M248.4 117a3.5 3.5 0 1 0 0.1 0M249.4 117a3.5 3.5 0 1 0 0.1 0M250.4 116a3.5 3.5 0 1 0 0.1 0M251.4 117a3.5 3.5 0 1 0 0.1 0M253.4 117a3.5 3.5 0 1 0 0.1 0M254.4 116a3.5 3.5 0 1 0 0.1 0M255.4 117a3.5 3.5 0 1 0 0.1 0M256.4 117a3.5 3.5 0 1 0 0.1 0M258.4 116a3.5 3.5 0 1 0 0.1 0M259.4 116a3.5 3.5 0 1 0 0.1 0M260.4 117a3.5 3.5 0 1 0 0.1 0M261.4 116a3.5 3.5 0 1 0 0.1 0M262.4 116a3.5 3.5 0 1 0 0.1 0M264.4 116a3.5 3.5 0 1 0 0.1 0M265.4 116a3.5 3.5 0 1 0 0.1 0M267.4 117a3.5 3.5 0 1 0 0.1 0M268.4 118a3.5 3.5 0 1 0 0.1 0M268.4 116a3.5 3.5 0 1 0 0.1 0M270.4 117a3.5 3.5 0 1 0 0.1 0M272.4 116a3.5 3.5 0 1 0 0.1 0M273.4 117a3.5 3.5 0 1 0 0.1 0M274.4 116a3.5 3.5 0 1 0 0.1 0M275.4 115a3.5 3.5 0 1 0 0.1 0M276.4 117a3.5 3.5 0 1 0 0.1 0M278.4 116a3.5 3.5 0 1 0 0.1 0M279.4 116a3.5 3.5 0 1 0 0.1 0M280.4 116a3.5 3.5 0 1 0 0.1 0M281.4 117a3.5 3.5 0 1 0 0.1 0M283.4 116a3.5 3.5 0 1 0 0.1 0M284.4 117a3.5 3.5 0 1 0 0.1 0M285.4 115a3.5 3.5 0 1 0 0.1 0M287.4 117a3.5 3.5 0 1 0 0.1 0M289.4 116a3.5 3.5 0 1 0 0.1 0M290.4 116a3.5 3.5 0 1 0 0.1 0M292.4 116a3.5 3.5 0 1 0 0.1 0M293.4 116a3.5 3.5 0 1 0 0.1 0M294.4 116a3.5 3.5 0 1 0 0.1 0M295.4 116a3.5 3.5 0 1 0 0.1 0M297.4 115a3.5 3.5 0 1 0 0.1 0M298.4 116a3.5 3.5 0 1 0 0.1 0M299.4 115a3.5 3.5 0 1 0 0.1 0M301.4 117a3.5 3.5 0 1 0 0.1 0M302.4 116a3.5 3.5 0 1 0 0.1 0M303.4 115a3.5 3.5 0 1 0 0.1 0M305.4 117a3.5 3.5 0 1 0 0.1 0M305.4 116a3.5 3.5 0 1 0 0.1 0M306.4 116a3.5 3.5 0 1 0 0.1 0M308.4 116a3.5 3.5 0 1 0 0.1 0M309.4 116a3.5 3.5 0 1 0 0.1 0M310.4 116a3.5 3.5 0 1 0 0.1 0M312.4 116a3.5 3.5 0 1 0 0.1 0M313.4 115a3.5 3.5 0 1 0 0.1 0M315.4 116a3.5 3.5 0 1 0 0.1 0M316.4 116a3.5 3.5 0 1 0 0.1 0M317.4 116a3.5 3.5 0 1 0 0.1 0M318.4 116a3.5 3.5 0 1 0 0.1 0M319.4 114a3.5 3.5 0 1 0 0.1 0M320.4 115a3.5 3.5 0 1 0 0.1 0M321.4 115a3.5 3.5 0 1 0 0.1 0M322.4 116a3.5 3.5 0 1 0 0.1 0M323.4 115a3.5 3.5 0 1 0 0.1 0M324.4 116a3.5 3.5 0 1 0 0.1 0M326.4 116a3.5 3.5 0 1 0 0.1 0M327.4 116a3.5 3.5 0 1 0 0.1 0M328.4 115a3.5 3.5 0 1 0 0.1 0M329.4 116a3.5 3.5 0 1 0 0.1 0M331.4 116a3.5 3.5 0 1 0 0.1 0M332.4 116a3.5 3.5 0 1 0 0.1 0M333.4 117a3.5 3.5 0 1 0 0.1 0M334.4 116a3.5 3.5 0 1 0 0.1 0M336.4 116a3.5 3.5 0 1 0 0.1 0M337.4 115a3.5 3.5 0 1 0 0.1 0M338.4 115a3.5 3.5 0 1 0 0.1 0M340.4 115a3.5 3.5 0 1 0 0.1 0M342.4 115a3.5 3.5 0 1 0 0.1 0M343.4 115a3.5 3.5 0 1 0 0.1 0M344.4 115a3.5 3.5 0 1 0 0.1 0M345.4 116a3.5 3.5 0 1 0 0.1 0M346.4 115a3.5 3.5 0 1 0 0.1 0M347.4 116a3.5 3.5 0 1 0 0.1 0M348.4 116a3.5 3.5 0 1 0 0.1 0M350.4 116a3.5 3.5 0 1 0 0.1 0M351.4 117a3.5 3.5 0 1 0 0.1 0M352.4 117a3.5 3.5 0 1 0 0.1 0M354.4 117a3.5 3.5 0 1 0 0.1 0M355.4 117a3.5 3.5 0 1 0 0.1 0M356.4 115a3.5 3.5 0 1 0 0.1 0M357.4 117a3.5 3.5 0 1 0 0.1 0M358.4 116a3.5 3.5 0 1 0 0.1 0M359.4 116a3.5 3.5 0 1 0 0.1 0M360.4 117a3.5 3.5 0 1 0 0.1 0M362.4 116a3.5 3.5 0 1 0 0.1 0M363.4 117a3.5 3.5 0 1 0 0.1 0M364.4 117a3.5 3.5 0 1 0 0.1 0M366.4 117a3.5 3.5 0 1 0 0.1 0M367.4 117a3.5 3.5 0 1 0 0.1 0M369.4 117a3.5 3.5 0 1 0 0.1 0M370.4 117a3.5 3.5 0 1 0 0.1 0" stroke="#00c0c0" stroke-width="1" fill="none" shape-rendering="crispEdges"/>
<path d="M62.5 177a3.5 3.5 0 1 0 0.1 0M64.5 177a3.5 3.5 0 1 0 0.1 0M65.5 176a3.5 3.5 0 1 0 0.1 0M66.5 177a3.5 3.5 0 1 0 0.1 0M67.5 177a3.5 3.5 0 1 0 0.1 0M68.5 177a3.5 3.5 0 1 0 0.1 0M69.5 177a3.5 3.5 0 1 0 0.1 0M71.5 176a3.5 3.5 0 1 0 0.1 0M73.5 177a3.5 3.5 0 1 0 0.1 0M74.5 177a3.5 3.5 0 1 0 0.1 0M76.5 176a3.5 3.5 0 1 0 0.1 0M77.5 178a3.5 3.5 0 1 0 0.1 0M78.5 177a3.5 3.5 0 1 0 0.1 0M80.5 176a3.5 3.5 0 1 0 0.1 0M81.5 177a3.5 3.5 0 1 0 0.1 0M83.5 176a3.5 3.5 0 1 0 0.1 0M85.5 177a3.5 3.5 0 1 0 0.1 0M87.5 177a3.5 3.5 0 1 0 0.1 0M87.5 177a3.5 3.5 0 1 0 0.1 0M89.5 176a3.5 3.5 0 1 0 0.1 0M91.5 176a3.5 3.5 0 1 0 0.1 0M92.5 176a3.5 3.5 0 1 0 0.1 0M94.5 176a3.5 3.5 0 1 0 0.1 0M95.5 176a3.5 3.5 0 1 0 0.1 0M97.5 177a3.5 3.5 0 1 0 0.1 0M98.5 177a3.5 3.5 0 1 0 0.1 0M99.5 176a3.5 3.5 0 1 0 0.1 0M100.5 176a3.5 3.5 0 1 0 0.1 0M102.5 176a3.5 3.5 0 1 0 0.1 0M104.5 176a3.5 3.5 0 1 0 0.1 0M105.5 175a3.5 3.5 0 1 0 0.1 0M107.5 176a3.5 3.5 0 1 0 0.1 0M108.5 175a3.5 3.5 0 1 0 0.1 0M110.5 177a3.5 3.5 0 1 0 0.1 0M111.5 175a3.5 3.5 0 1 0 0.1 0M113.5 175a3.5 3.5 0 1 0 0.1 0M114.5 177a3.5 3.5 0 1 0 0.1 0M115.5 176a3.5 3.5 0 1 0 0.1 0M117.5 177a3.5 3.5 0 1 0 0.1 0M118.5 176a3.5 3.5 0 1 0 0.1 0M120.5 176a3.5 3.5 0 1 0 0.1 0M122.5 176a3.5 3.5 0 1 0 0.1 0M123.5 176a3.5 3.5 0 1 0 0.1 0M124.5 176a3.5 3.5 0 1 0 0.1 0M125.5 175a3.5 3.5 0 1 0 0.1 0M126.5 176a3.5 3.5 0 1 0 0.1 0M128.4 176a3.5 3.5 0 1 0 0.1 0M129.4 176a3.5 3.5 0 1 0 0.1 0M131.4 176a3.5 3.5 0 1 0 0.1 0M132.4 175a3.5 3.5 0 1 0 0.1 0M133.4 175a3.5 3.5 0 1 0 0.1 0M134.4 176a3.5 3.5 0 1 0 0.1 0M136.4 175a3.5 3.5 0 1 0 0.1 0M138.4 175a3.5 3.5 0 1 0 0.1 0M139.4 177a3.5 3.5 0 1 0 0.1 0M140.4 177a3.5 3.5 0 1 0 0.1 0M142.4 175a3.5 3.5 0 1 0 0.1 0M143.4 176a3.5 3.5 0 1 0 0.1 0M145.4 177a3.5 3.5 0 1 0 0.1 0M146.4 176a3.5 3.5 0 1 0 0.1 0M147.4 176a3.5 3.5 0 1 0 0.1 0M148.4 175a3.5 3.5 0 1 0 0.1 0M149.4 175a3.5 3.5 0 1 0 0.1 0M151.4 175a3.5 3.5 0 1 0 0.1 0M153.4 175a3.5 3.5 0 1 0 0.1 0M154.4 175a3.5 3.5 0 1 0 0.1 0M155.4 177a3.5 3.5 0 1 0 0.1 0M156.4 177a3.5 3.5 0 1 0 0.1 0M157.4 175a3.5 3.5 0 1 0 0.1 0M159.4 177a3.5 3.5 0 1 0 0.1 0M161.4 177a3.5 3.5 0 1 0 0.1 0M162.4 177a3.5 3.5 0 1 0 0.1 0M163.4 176a3.5 3.5 0 1 0 0.1 0M165.4 176a3.5 3.5 0 1 0 0.1 0M167.4 177a3.5 3.5 0 1 0 0.1 0M168.4 176a3.5 3.5 0 1 0 0.1 0M170.4 178a3.5 3.5 0 1 0 0.1 0M171.4 176a3.5 3.5 0 1 0 0.1 0M172.4 176a3.5 3.5 0 1 0 0.1 0M174.4 177a3.5 3.5 0 1 0 0.1 0M175.4 177a3.5 3.5 0 1 0 0.1 0M176.4 177a3.5 3.5 0 1 0 0.1 0M178.4 176a3.5 3.5 0 1 0 0.1 0M180.4 177a3.5 3.5 0 1 0 0.1 0M181.4 177a3.5 3.5 0 1 0 0.1 0M183.4 177a3.5 3.5 0 1 0 0.1 0M184.4 178a3.5 3.5 0 1 0 0.1 0M186.4 177a3.5 3.5 0 1 0 0.1 0M187.4 176a3.5 3.5 0 1 0 0.1 0M189.4 177a3.5 3.5 0 1 0 0.1 0M191.4 176a3.5 3.5 0 1 0 0.1 0M192.4 178a3.5 3.5 0 1 0 0.1 0M194.4 177a3.5 3.5 0 1 0 0.1 0M195.4 177a3.5 3.5 0 1 0 0.1 0M197.4 176a3.5 3.5 0 1 0 0.1 0M199.4 177a3.5 3.5 0 1 0 0.1 0M201.4 177a3.5 3.5 0 1 0 0.1 0M202.4 175a3.5 3.5 0 1 0 0.1 0M203.4 176a3.5 3.5 0 1 0 0.1 0M204.4 177a3.5 3.5 0 1 0 0.1 0M206.4 175a3.5 3.5 0 1 0 0.1 0M208.4 177a3.5 3.5 0 1 0 0.1 0M210.4 177a3.5 3.5 0 1 0 0.1 0M211.4 177a3.5 3.5 0 1 0 0.1 0M213.4 177a3.5 3.5 0 1 0 0.1 0M215.4 176a3.5 3.5 0 1 0 0.1 0M216.4 176a3.5 3.5 0 1 0 0.1 0M217.4 175a3.5 3.5 0 1 0 0.1 0M219.4 177a3.5 3.5 0 1 0 0.1 0M220.4 176a3.5 3.5 0 1 0 0.1 0M222.4 176a3.5 3.5 0 1 0 0.1 0M223.4 175a3.5 3.5 0 1 0 0.1 0M224.4 177a3.5 3.5 0 1 0 0.1 0M226.4 175a3.5 3.5 0 1 0 0.1 0M228.4 177a3.5 3.5 0 1 0 0.1 0M229.4 176a3.5 3.5 0 1 0 0.1 0M230.4 177a3.5 3.5 0 1 0 0.1 0M232.4 176a3.5 3.5 0 1 0 0.1 0M233.4 175a3.5 3.5 0 1 0 0.1 0M234.4 175a3.5 3.5 0 1 0 0.1 0M236.4 175a3.5 3.5 0 1 0 0.1 0M238.4 175a3.5 3.5 0 1 0 0.1 0M239.4 175a3.5 3.5 0 1 0 0.1 0M240.4 177a3.5 3.5 0 1 0 0.1 0M241.4 175a3.5 3.5 0 1 0 0.1 0M243.4 176a3.5 3.5 0 1 0 0.1 0M244.4 176a3.5 3.5 0 1 0 0.1 0M245.4 176a3.5 3.5 0 1 0 0.1 0M246.4 175a3.5 3.5 0 1 0 0.1 0M248.4 177a3.5 3.5 0 1 0 0.1 0M249.4 176a3.5 3.5 0 1 0 0.1 0M250.4 176a3.5 3.5 0 1 0 0.1 0M252.4 177a3.5 3.5 0 1 0 0.1 0M253.4 177a3.5 3.5 0 1 0 0.1 0M255.4 175a3.5 3.5 0 1 0 0.1 0M256.4 175a3.5 3.5 0 1 0 0.1 0M257.4 175a3.5 3.5 0 1 0 0.1 0M258.4 176a3.5 3.5 0 1 0 0.1 0M260.4 176a3.5 3.5 0 1 0 0.1 0M262.4 177a3.5 3.5 0 1 0 0.1 0M263.4 176a3.5 3.5 0 1 0 0.1 0M264.4 175a3.5 3.5 0 1 0 0.1 0M266.4 175a3.5 3.5 0 1 0 0.1 0M267.4 176a3.5 3.5 0 1 0 0.1 0M269.4 177a3.5 3.5 0 1 0 0.1 0M271.4 176a3.5 3.5 0 1 0 0.1 0M272.4 177a3.5 3.5 0 1 0 0.1 0M273.4 176a3.5 3.5 0 1 0 0.1 0M274.4 176a3.5 3.5 0 1 0 0.1 0M276.4 177a3.5 3.5 0 1 0 0.1 0M277.4 177a3.5 3.5 0 1 0 0.1 0M278.4 177a3.5 3.5 0 1 0 0.1 0M280.4 177a3.5 3.5 0 1 0 0.1 0M282.4 176a3.5 3.5 0 1 0 0.1 0M283.4 177a3.5 3.5 0 1 0 0.1 0M285.4 177a3.5 3.5 0 1 0 0.1 0M286.4 177a3.5 3.5 0 1 0 0.1 0M288.4 176a3.5 3.5 0 1 0 0.1 0M289.4 176a3.5 3.5 0 1 0 0.1 0M290.4 177a3.5 3.5 0 1 0 0.1 0M291.4 176a3.5 3.5 0 1 0 0.1 0M292.4 177a3.5 3.5 0 1 0 0.1 0M293.4 177a3.5 3.5 0 1 0 0.1 0M294.4 176a3.5 3.5 0 1 0 0.1 0M296.4 176a3.5 3.5 0 1 0 0.1 0M298.4 178a3.5 3.5 0 1 0 0.1 0M299.4 176a3.5 3.5 0 1 0 0.1 0M301.4 176a3.5 3.5 0 1 0 0.1 0M303.4 178a3.5 3.5 0 1 0 0.1 0M304.4 177a3.5 3.5 0 1 0 0.1 0M305.4 178a3.5 3.5 0 1 0 0.1 0M307.4 177a3.5 3.5 0 1 0 0.1 0M308.4 176a3.5 3.5 0 1 0 0.1 0M309.4 177a3.5 3.5 0 1 0 0.1 0M310.4 176a3.5 3.5 0 1 0 0.1 0M312.4 176a3.5 3.5 0 1 0 0.1 0M313.4 176a3.5 3.5 0 1 0 0.1 0M314.4 178a3.5 3.5 0 1 0 0.1 0M316.4 176a3.5 3.5 0 1 0 0.1 0M317.4 176a3.5 3.5 0 1 0 0.1 0M319.4 176a3.5 3.5 0 1 0 0.1 0M321.4 176a3.5 3.5 0 1 0 0.1 0M323.4 177a3.5 3.5 0 1 0 0.1 0M324.4 177a3.5 3.5 0 1 0 0.1 0M325.4 176a3.5 3.5 0 1 0 0.1 0M326.4 176a3.5 3.5 0 1 0 0.1 0M328.4 178a3.5 3.5 0 1 0 0.1 0M330.4 175a3.5 3.5 0 1 0 0.1 0M331.4 177a3.5 3.5 0 1 0 0.1 0M332.4 177a3.5 3.5 0 1 0 0.1 0M333.4 177a3.5 3.5 0 1 0 0.1 0M334.4 177a3.5 3.5 0 1 0 0.1 0M335.4 175a3.5 3.5 0 1 0 0.1 0M336.4 177a3.5 3.5 0 1 0 0.1 0M337.4 175a3.5 3.5 0 1 0 0.1 0M339.4 177a3.5 3.5 0 1 0 0.1 0M340.4 176a3.5 3.5 0 1 0 0.1 0M341.4 175a3.5 3.5 0 1 0 0.1 0M342.4 177a3.5 3.5 0 1 0 0.1 0M344.4 175a3.5 3.5 0 1 0 0.1 0M344.4 176a3.5 3.5 0 1 0 0.1 0M346.4 175a3.5 3.5 0 1 0 0.1 0M347.4 176a3.5 3.5 0 1 0 0.1 0M349.4 177a3.5 3.5 0 1 0 0.1 0M350.4 175a3.5 3.5 0 1 0 0.1 0M351.4 176a3.5 3.5 0 1 0 0.1 0M352.4 176a3.5 3.5 0 1 0 0.1 0M353.4 177a3.5 3.5 0 1 0 0.1 0M354.4 177a3.5 3.5 0 1 0 0.1 0M356.4 176a3.5 3.5 0 1 0 0.1 0M357.4 177a3.5 3.5 0 1 0 0.1 0M358.4 177a3.5 3.5 0 1 0 0.1 0M360.4 175a3.5 3.5 0 1 0 0.1 0M361.4 175a3.5 3.5 0 1 0 0.1 0M362.4 175a3.5 3.5 0 1 0 0.1 0M364.4 175a3.5 3.5 0 1 0 0.1 0M365.4 176a3.5 3.5 0 1 0 0.1 0M367.4 175a3.5 3.5 0 1 0 0.1 0M368.4 176a3.5 3.5 0 1 0 0.1 0M370.4 175a3.5 3.5 0 1 0 0.1 0" stroke="#000000" stroke-width="1" fill="none" shape-rendering="crispEdges"/>
<path d="M62.5 302a3.5 3.5 0 1 0 0.1 0M63.5 303a3.5 3.5 0 1 0 0.1 0M65.5 302a3.5 3.5 0 1 0 0.1 0M67.5 302a3.5 3.5 0 1 0 0.1 0M68.5 300a3.5 3.5 0 1 0 0.1 0M70.5 301a3.5 3.5 0 1 0 0.1 0M71.5 301a3.5 3.5 0 1 0 0.1 0M72.5 303a3.5 3.5 0 1 0 0.1 0M73.5 301a3.5 3.5 0 1 0 0.1 0M75.5 301a3.5 3.5 0 1 0 0.1 0M76.5 302a3.5 3.5 0 1 0 0.1 0M78.5 302a3.5 3.5 0 1 0 0.1 0M79.5 301a3.5 3.5 0 1 0 0.1 0M81.5 303a3.5 3.5 0 1 0 0.1 0M82.5 301a3.5 3.5 0 1 0 0.1 0M84.5 302a3.5 3.5 0 1 0 0.1 0M85.5 301a3.5 3.5 0 1 0 0.1 0M86.5 301a3.5 3.5 0 1 0 0.1 0M88.5 303a3.5 3.5 0 1 0 0.1 0M89.5 303a3.5 3.5 0 1 0 0.1 0M91.5 301a3.5 3.5 0 1 0 0.1 0M93.5 304a3.5 3.5 0 1 0 0.1 0M94.5 302a3.5 3.5 0 1 0 0.1 0M96.5 303a3.5 3.5 0 1 0 0.1 0M97.5 304a3.5 3.5 0 1 0 0.1 0M99.5 302a3.5 3.5 0 1 0 0.1 0M100.5 302a3.5 3.5 0 1 0 0.1 0M102.5 304a3.5 3.5 0 1 0 0.1 0M104.5 304a3.5 3.5 0 1 0 0.1 0M106.5 304a3.5 3.5 0 1 0 0.1 0M107.5 303a3.5 3.5 0 1 0 0.1 0M109.5 304a3.5 3.5 0 1 0 0.1 0M110.5 302a3.5 3.5 0 1 0 0.1 0M111.5 302a3.5 3.5 0 1 0 0.1 0M113.5 301a3.5 3.5 0 1 0 0.1 0M114.5 303a3.5 3.5 0 1 0 0.1 0M115.5 302a3.5 3.5 0 1 0 0.1 0M117.5 303a3.5 3.5 0 1 0 0.1 0M119.5 303a3.5 3.5 0 1 0 0.1 0M121.5 303a3.5 3.5 0 1 0 0.1 0M123.5 301a3.5 3.5 0 1 0 0.1 0M125.5 302a3.5 3.5 0 1 0 0.1 0M127.5 302a3.5 3.5 0 1 0 0.1 0M128.4 303a3.5 3.5 0 1 0 0.1 0M130.4 301a3.5 3.5 0 1 0 0.1 0M131.4 302a3.5 3.5 0 1 0 0.1 0M133.4 301a3.5 3.5 0 1 0 0.1 0M135.4 302a3.5 3.5 0 1 0 0.1 0M136.4 302a3.5 3.5 0 1 0 0.1 0M138.4 302a3.5 3.5 0 1 0 0.1 0M139.4 302a3.5 3.5 0 1 0 0.1 0M141.4 301a3.5 3.5 0 1 0 0.1 0M142.4 301a3.5 3.5 0 1 0 0.1 0M143.4 301a3.5 3.5 0 1 0 0.1 0M144.4 301a3.5 3.5 0 1 0 0.1 0M145.4 302a3.5 3.5 0 1 0 0.1 0M147.4 302a3.5 3.5 0 1 0 0.1 0M149.4 302a3.5 3.5 0 1 0 0.1 0M150.4 302a3.5 3.5 0 1 0 0.1 0M151.4 302a3.5 3.5 0 1 0 0.1 0M153.4 301a3.5 3.5 0 1 0 0.1 0M154.4 301a3.5 3.5 0 1 0 0.1 0M155.4 302a3.5 3.5 0 1 0 0.1 0M157.4 302a3.5 3.5 0 1 0 0.1 0M158.4 301a3.5 3.5 0 1 0 0.1 0M159.4 301a3.5 3.5 0 1 0 0.1 0M161.4 301a3.5 3.5 0 1 0 0.1 0M162.4 303a3.5 3.5 0 1 0 0.1 0M164.4 302a3.5 3.5 0 1 0 0.1 0M165.4 300a3.5 3.5 0 1 0 0.1 0M167.4 301a3.5 3.5 0 1 0 0.1 0M168.4 301a3.5 3.5 0 1 0 0.1 0M169.4 302a3.5 3.5 0 1 0 0.1 0M170.4 301a3.5 3.5 0 1 0 0.1 0M172.4 302a3.5 3.5 0 1 0 0.1 0M173.4 301a3.5 3.5 0 1 0 0.1 0M174.4 302a3.5 3.5 0 1 0 0.1 0M176.4 302a3.5 3.5 0 1 0 0.1 0M178.4 302a3.5 3.5 0 1 0 0.1 0M180.4 302a3.5 3.5 0 1 0 0.1 0M182.4 302a3.5 3.5 0 1 0 0.1 0M183.4 302a3.5 3.5 0 1 0 0.1 0M185.4 301a3.5 3.5 0 1 0 0.1 0M187.4 300a3.5 3.5 0 1 0 0.1 0M189.4 302a3.5 3.5 0 1 0 0.1 0M191.4 303a3.5 3.5 0 1 0 0.1 0M192.4 302a3.5 3.5 0 1 0 0.1 0M194.4 303a3.5 3.5 0 1 0 0.1 0M196.4 302a3.5 3.5 0 1 0 0.1 0M197.4 302a3.5 3.5 0 1 0 0.1 0M199.4 302a3.5 3.5 0 1 0 0.1 0M200.4 302a3.5 3.5 0 1 0 0.1 0M202.4 302a3.5 3.5 0 1 0 0.1 0M204.4 303a3.5 3.5 0 1 0 0.1 0M205.4 302a3.5 3.5 0 1 0 0.1 0M206.4 302a3.5 3.5 0 1 0 0.1 0M207.4 303a3.5 3.5 0 1 0 0.1 0M209.4 301a3.5 3.5 0 1 0 0.1 0M211.4 302a3.5 3.5 0 1 0 0.1 0M213.4 303a3.5 3.5 0 1 0 0.1 0M215.4 302a3.5 3.5 0 1 0 0.1 0M216.4 304a3.5 3.5 0 1 0 0.1 0M217.4 301a3.5 3.5 0 1 0 0.1 0M219.4 303a3.5 3.5 0 1 0 0.1 0M221.4 303a3.5 3.5 0 1 0 0.1 0M222.4 304a3.5 3.5 0 1 0 0.1 0M224.4 303a3.5 3.5 0 1 0 0.1 0M225.4 302a3.5 3.5 0 1 0 0.1 0M227.4 303a3.5 3.5 0 1 0 0.1 0M228.4 304a3.5 3.5 0 1 0 0.1 0M230.4 303a3.5 3.5 0 1 0 0.1 0M231.4 302a3.5 3.5 0 1 0 0.1 0M232.4 303a3.5 3.5 0 1 0 0.1 0M234.4 304a3.5 3.5 0 1 0 0.1 0M236.4 302a3.5 3.5 0 1 0 0.1 0M237.4 303a3.5 3.5 0 1 0 0.1 0M239.4 302a3.5 3.5 0 1 0 0.1 0M241.4 303a3.5 3.5 0 1 0 0.1 0M242.4 302a3.5 3.5 0 1 0 0.1 0M244.4 303a3.5 3.5 0 1 0 0.1 0M246.4 301a3.5 3.5 0 1 0 0.1 0M248.4 303a3.5 3.5 0 1 0 0.1 0M250.4 304a3.5 3.5 0 1 0 0.1 0M251.4 302a3.5 3.5 0 1 0 0.1 0M253.4 301a3.5 3.5 0 1 0 0.1 0M254.4 302a3.5 3.5 0 1 0 0.1 0M255.4 301a3.5 3.5 0 1 0 0.1 0M257.4 302a3.5 3.5 0 1 0 0.1 0M258.4 303a3.5 3.5 0 1 0 0.1 0M260.4 301a3.5 3.5 0 1 0 0.1 0M261.4 303a3.5 3.5 0 1 0 0.1 0M263.4 302a3.5 3.5 0 1 0 0.1 0M263.4 301a3.5 3.5 0 1 0 0.1 0M265.4 302a3.5 3.5 0 1 0 0.1 0M267.4 301a3.5 3.5 0 1 0 0.1 0M269.4 302a3.5 3.5 0 1 0 0.1 0M270.4 302a3.5 3.5 0 1 0 0.1 0M271.4 303a3.5 3.5 0 1 0 0.1 0M273.4 301a3.5 3.5 0 1 0 0.1 0M274.4 301a3.5 3.5 0 1 0 0.1 0M276.4 300a3.5 3.5 0 1 0 0.1 0M277.4 301a3.5 3.5 0 1 0 0.1 0M278.4 302a3.5 3.5 0 1 0 0.1 0M280.4 302a3.5 3.5 0 1 0 0.1 0M281.4 300a3.5 3.5 0 1 0 0.1 0M283.4 301a3.5 3.5 0 1 0 0.1 0M284.4 301a3.5 3.5 0 1 0 0.1 0M286.4 301a3.5 3.5 0 1 0 0.1 0M287.4 303a3.5 3.5 0 1 0 0.1 0M288.4 301a3.5 3.5 0 1 0 0.1 0M290.4 301a3.5 3.5 0 1 0 0.1 0M291.4 303a3.5 3.5 0 1 0 0.1 0M292.4 303a3.5 3.5 0 1 0 0.1 0M294.4 302a3.5 3.5 0 1 0 0.1 0M295.4 300a3.5 3.5 0 1 0 0.1 0M297.4 303a3.5 3.5 0 1 0 0.1 0M298.4 303a3.5 3.5 0 1 0 0.1 0M300.4 301a3.5 3.5 0 1 0 0.1 0M302.4 303a3.5 3.5 0 1 0 0.1 0M303.4 303a3.5 3.5 0 1 0 0.1 0M304.4 301a3.5 3.5 0 1 0 0.1 0M306.4 301a3.5 3.5 0 1 0 0.1 0M307.4 303a3.5 3.5 0 1 0 0.1 0M309.4 303a3.5 3.5 0 1 0 0.1 0M310.4 301a3.5 3.5 0 1 0 0.1 0M311.4 301a3.5 3.5 0 1 0 0.1 0M313.4 301a3.5 3.5 0 1 0 0.1 0M315.4 301a3.5 3.5 0 1 0 0.1 0M317.4 302a3.5 3.5 0 1 0 0.1 0M318.4 301a3.5 3.5 0 1 0 0.1 0M319.4 303a3.5 3.5 0 1 0 0.1 0M320.4 301a3.5 3.5 0 1 0 0.1 0M321.4 302a3.5 3.5 0 1 0 0.1 0M323.4 301a3.5 3.5 0 1 0 0.1 0M324.4 302a3.5 3.5 0 1 0 0.1 0M325.4 303a3.5 3.5 0 1 0 0.1 0M326.4 302a3.5 3.5 0 1 0 0.1 0M328.4 301a3.5 3.5 0 1 0 0.1 0M330.4 303a3.5 3.5 0 1 0 0.1 0M332.4 302a3.5 3.5 0 1 0 0.1 0M333.4 303a3.5 3.5 0 1 0 0.1 0M334.4 304a3.5 3.5 0 1 0 0.1 0M335.4 304a3.5 3.5 0 1 0 0.1 0M337.4 302a3.5 3.5 0 1 0 0.1 0M338.4 302a3.5 3.5 0 1 0 0.1 0M340.4 302a3.5 3.5 0 1 0 0.1 0M342.4 303a3.5 3.5 0 1 0 0.1 0M343.4 302a3.5 3.5 0 1 0 0.1 0M345.4 302a3.5 3.5 0 1 0 0.1 0M347.4 302a3.5 3.5 0 1 0 0.1 0M349.4 303a3.5 3.5 0 1 0 0.1 0M350.4 303a3.5 3.5 0 1 0 0.1 0M351.4 303a3.5 3.5 0 1 0 0.1 0M353.4 302a3.5 3.5 0 1 0 0.1 0M354.4 301a3.5 3.5 0 1 0 0.1 0M355.4 303a3.5 3.5 0 1 0 0.1 0M356.4 303a3.5 3.5 0 1 0 0.1 0M357.4 303a3.5 3.5 0 1 0 0.1 0M359.4 302a3.5 3.5 0 1 0 0.1 0M360.4 301a3.5 3.5 0 1 0 0.1 0M361.4 302a3.5 3.5 0 1 0 0.1 0M362.4 303a3.5 3.5 0 1 0 0.1 0M364.4 302a3.5 3.5 0 1 0 0.1 0M366.4 303a3.5 3.5 0 1 0 0.1 0M368.4 303a3.5 3.5 0 1 0 0.1 0M369.4 302a3.5 3.5 0 1 0 0.1 0M370.4 303a3.5 3.5 0 1 0 0.1 0" stroke="#000080" stroke-width="1" fill="none" shape-rendering="crispEdges"/>
<path d="M62.5 358l3.5 3.5l-3.5 3.5l-3.5 -3.5zM65.5 359l3.5 3.5l-3.5 3.5l-3.5 -3.5zM67.5 360l3.5 3.5l-3.5 3.5l-3.5 -3.5zM70.5 359l3.5 3.5l-3.5 3.5l-3.5 -3.5zM72.5 358l3.5 3.5l-3.5 3.5l-3.5 -3.5zM76.5 360l3.5 3.5l-3.5 3.5l-3.5 -3.5zM79.5 358l3.5 3.5l-3.5 3.5l-3.5 -3.5zM81.5 358l3.5 3.5l-3.5 3.5l-3.5 -3.5zM83.5 359l3.5 3.5l-3.5 3.5l-3.5 -3.5zM85.5 358l3.5 3.5l-3.5 3.5l-3.5 -3.5zM88.5 360l3.5 3.5l-3.5 3.5l-3.5 -3.5zM90.5 360l3.5 3.5l-3.5 3.5l-3.5 -3.5zM93.5 360l3.5 3.5l-3.5 3.5l-3.5 -3.5zM95.5 359l3.5 3.5l-3.5 3.5l-3.5 -3.5zM98.5 359l3.5 3.5l-3.5 3.5l-3.5 -3.5zM100.5 361l3.5 3.5l-3.5 3.5l-3.5 -3.5zM103.5 359l3.5 3.5l-3.5 3.5l-3.5 -3.5zM105.5 361l3.5 3.5l-3.5 3.5l-3.5 -3.5zM108.5 358l3.5 3.5l-3.5 3.5l-3.5 -3.5zM110.5 358l3.5 3.5l-3.5 3.5l-3.5 -3.5zM114.5 359l3.5 3.5l-3.5 3.5l-3.5 -3.5zM118.5 360l3.5 3.5l-3.5 3.5l-3.5 -3.5zM119.5 360l3.5 3.5l-3.5 3.5l-3.5 -3.5zM122.5 360l3.5 3.5l-3.5 3.5l-3.5 -3.5zM126.5 359l3.5 3.5l-3.5 3.5l-3.5 -3.5zM127.5 361l3.5 3.5l-3.5 3.5l-3.5 -3.5zM130.5 361l3.5 3.5l-3.5 3.5l-3.5 -3.5zM133.5 360l3.5 3.5l-3.5 3.5l-3.5 -3.5zM137.5 359l3.5 3.5l-3.5 3.5l-3.5 -3.5zM140.5 358l3.5 3.5l-3.5 3.5l-3.5 -3.5zM143.5 359l3.5 3.5l-3.5 3.5l-3.5 -3.5zM146.5 360l3.5 3.5l-3.5 3.5l-3.5 -3.5zM148.5 360l3.5 3.5l-3.5 3.5l-3.5 -3.5zM149.5 359l3.5 3.5l-3.5 3.5l-3.5 -3.5zM153.5 358l3.5 3.5l-3.5 3.5l-3.5 -3.5zM156.5 360l3.5 3.5l-3.5 3.5l-3.5 -3.5zM159.5 359l3.5 3.5l-3.5 3.5l-3.5 -3.5zM161.5 357l3.5 3.5l-3.5 3.5l-3.5 -3.5zM164.5 358l3.5 3.5l-3.5 3.5l-3.5 -3.5zM166.5 358l3.5 3.5l-3.5 3.5l-3.5 -3.5zM168.5 359l3.5 3.5l-3.5 3.5l-3.5 -3.5zM171.5 358l3.5 3.5l-3.5 3.5l-3.5 -3.5zM173.5 358l3.5 3.5l-3.5 3.5l-3.5 -3.5zM176.5 360l3.5 3.5l-3.5 3.5l-3.5 -3.5zM178.5 358l3.5 3.5l-3.5 3.5l-3.5 -3.5zM182.5 357l3.5 3.5l-3.5 3.5l-3.5 -3.5zM185.5 358l3.5 3.5l-3.5 3.5l-3.5 -3.5zM188.5 359l3.5 3.5l-3.5 3.5l-3.5 -3.5zM192.5 358l3.5 3.5l-3.5 3.5l-3.5 -3.5zM195.5 359l3.5 3.5l-3.5 3.5l-3.5 -3.5zM198.5 360l3.5 3.5l-3.5 3.5l-3.5 -3.5zM201.5 358l3.5 3.5l-3.5 3.5l-3.5 -3.5zM203.5 359l3.5 3.5l-3.5 3.5l-3.5 -3.5zM206.5 358l3.5 3.5l-3.5 3.5l-3.5 -3.5zM208.5 358l3.5 3.5l-3.5 3.5l-3.5 -3.5zM211.5 359l3.5 3.5l-3.5 3.5l-3.5 -3.5zM213.5 359l3.5 3.5l-3.5 3.5l-3.5 -3.5zM216.5 359l3.5 3.5l-3.5 3.5l-3.5 -3.5zM218.5 358l3.5 3.5l-3.5 3.5l-3.5 -3.5zM220.5 361l3.5 3.5l-3.5 3.5l-3.5 -3.5zM223.5 358l3.5 3.5l-3.5 3.5l-3.5 -3.5zM226.5 361l3.5 3.5l-3.5 3.5l-3.5 -3.5zM229.5 358l3.5 3.5l-3.5 3.5l-3.5 -3.5zM232.5 359l3.5 3.5l-3.5 3.5l-3.5 -3.5zM234.5 360l3.5 3.5l-3.5 3.5l-3.5 -3.5zM236.5 361l3.5 3.5l-3.5 3.5l-3.5 -3.5zM239.5 360l3.5 3.5l-3.5 3.5l-3.5 -3.5zM243.5 360l3.5 3.5l-3.5 3.5l-3.5 -3.5zM245.5 359l3.5 3.5l-3.5 3.5l-3.5 -3.5zM247.5 358l3.5 3.5l-3.5 3.5l-3.5 -3.5zM250.5 360l3.5 3.5l-3.5 3.5l-3.5 -3.5zM253.5 358l3.5 3.5l-3.5 3.5l-3.5 -3.5zM256.5 360l3.5 3.5l-3.5 3.5l-3.5 -3.5zM260.5 358l3.5 3.5l-3.5 3.5l-3.5 -3.5zM263.5 360l3.5 3.5l-3.5 3.5l-3.5 -3.5zM266.5 358l3.5 3.5l-3.5 3.5l-3.5 -3.5zM268.5 360l3.5 3.5l-3.5 3.5l-3.5 -3.5zM271.5 358l3.5 3.5l-3.5 3.5l-3.5 -3.5zM274.5 358l3.5 3.5l-3.5 3.5l-3.5 -3.5zM277.5 358l3.5 3.5l-3.5 3.5l-3.5 -3.5zM279.5 359l3.5 3.5l-3.5 3.5l-3.5 -3.5zM282.5 359l3.5 3.5l-3.5 3.5l-3.5 -3.5zM285.5 360l3.5 3.5l-3.5 3.5l-3.5 -3.5zM289.5 358l3.5 3.5l-3.5 3.5l-3.5 -3.5zM292.5 357l3.5 3.5l-3.5 3.5l-3.5 -3.5zM294.5 359l3.5 3.5l-3.5 3.5l-3.5 -3.5zM296.5 359l3.5 3.5l-3.5 3.5l-3.5 -3.5zM298.5 358l3.5 3.5l-3.5 3.5l-3.5 -3.5zM302.5 357l3.5 3.5l-3.5 3.5l-3.5 -3.5zM304.5 358l3.5 3.5l-3.5 3.5l-3.5 -3.5zM306.5 359l3.5 3.5l-3.5 3.5l-3.5 -3.5zM308.5 360l3.5 3.5l-3.5 3.5l-3.5 -3.5zM311.5 360l3.5 3.5l-3.5 3.5l-3.5 -3.5zM314.5 358l3.5 3.5l-3.5 3.5l-3.5 -3.5zM317.5 359l3.5 3.5l-3.5 3.5l-3.5 -3.5zM320.5 359l3.5 3.5l-3.5 3.5l-3.5 -3.5zM322.5 360l3.5 3.5l-3.5 3.5l-3.5 -3.5zM326.5 360l3.5 3.5l-3.5 3.5l-3.5 -3.5zM328.5 359l3.5 3.5l-3.5 3.5l-3.5 -3.5zM331.5 360l3.5 3.5l-3.5 3.5l-3.5 -3.5zM333.5 359l3.5 3.5l-3.5 3.5l-3.5 -3.5zM335.5 359l3.5 3.5l-3.5 3.5l-3.5 -3.5zM338.5 361l3.5 3.5l-3.5 3.5l-3.5 -3.5zM341.5 361l3.5 3.5l-3.5 3.5l-3.5 -3.5zM345.5 361l3.5 3.5l-3.5 3.5l-3.5 -3.5zM348.5 361l3.5 3.5l-3.5 3.5l-3.5 -3.5zM350.5 360l3.5 3.5l-3.5 3.5l-3.5 -3.5zM353.5 359l3.5 3.5l-3.5 3.5l-3.5 -3.5zM356.5 361l3.5 3.5l-3.5 3.5l-3.5 -3.5zM359.5 360l3.5 3.5l-3.5 3.5l-3.5 -3.5zM361.5 359l3.5 3.5l-3.5 3.5l-3.5 -3.5zM365.5 358l3.5 3.5l-3.5 3.5l-3.5 -3.5zM367.5 360l3.5 3.5l-3.5 3.5l-3.5 -3.5zM370.5 358l3.5 3.5l-3.5 3.5l-3.5 -3.5z" stroke="#008000" stroke-width="1" fill="none" shape-rendering="crispEdges"/>
<path d="M62.5 383.5l4 4l-4 4l-4 -4zM65.5 383.5l4 4l-4 4l-4 -4zM68.5 383.5l4 4l-4 4l-4 -4zM70.5 382.5l4 4l-4 4l-4 -4zM74.5 384.5l4 4l-4 4l-4 -4zM76.5 385.5l4 4l-4 4l-4 -4zM78.5 382.5l4 4l-4 4l-4 -4zM82.5 383.5l4 4l-4 4l-4 -4zM84.5 384.5l4 4l-4 4l-4 -4zM87.5 384.5l4 4l-4 4l-4 -4zM89.5 384.5l4 4l-4 4l-4 -4zM92.5 382.5l4 4l-4 4l-4 -4zM95.5 382.5l4 4l-4 4l-4 -4zM98.5 385.5l4 4l-4 4l-4 -4zM101.5 385.5l4 4l-4 4l-4 -4zM104.5 383.5l4 4l-4 4l-4 -4zM109.5 385.5l4 4l-4 4l-4 -4zM111.5 385.5l4 4l-4 4l-4 -4zM113.5 383.5l4 4l-4 4l-4 -4zM118.5 384.5l4 4l-4 4l-4 -4zM121.5 383.5l4 4l-4 4l-4 -4zM125.5 382.5l4 4l-4 4l-4 -4zM127.5 383.5l4 4l-4 4l-4 -4zM129.5 384.5l4 4l-4 4l-4 -4zM131.5 383.5l4 4l-4 4l-4 -4zM135.5 383.5l4 4l-4 4l-4 -4zM139.5 384.5l4 4l-4 4l-4 -4zM143.5 384.5l4 4l-4 4l-4 -4zM147.5 385.5l4 4l-4 4l-4 -4zM149.5 384.5l4 4l-4 4l-4 -4zM152.5 384.5l4 4l-4 4l-4 -4zM155.5 384.5l4 4l-4 4l-4 -4zM157.5 383.5l4 4l-4 4l-4 -4zM161.5 385.5l4 4l-4 4l-4 -4zM164.5 381.5l4 4l-4 4l-4 -4zM167.5 381.5l4 4l-4 4l-4 -4zM171.5 384.5l4 4l-4 4l-4 -4zM173.5 384.5l4 4l-4 4l-4 -4zM176.5 382.5l4 4l-4 4l-4 -4zM178.5 383.5l4 4l-4 4l-4 -4zM182.5 383.5l4 4l-4 4l-4 -4zM184.5 381.5l4 4l-4 4l-4 -4zM186.5 384.5l4 4l-4 4l-4 -4zM188.5 383.5l4 4l-4 4l-4 -4zM191.5 384.5l4 4l-4 4l-4 -4zM194.5 382.5l4 4l-4 4l-4 -4zM198.5 384.5l4 4l-4 4l-4 -4zM201.5 385.5l4 4l-4 4l-4 -4zM205.5 382.5l4 4l-4 4l-4 -4zM208.5 383.5l4 4l-4 4l-4 -4zM211.5 385.5l4 4l-4 4l-4 -4zM214.5 382.5l4 4l-4 4l-4 -4zM217.5 385.5l4 4l-4 4l-4 -4zM220.5 384.5l4 4l-4 4l-4 -4zM223.5 383.5l4 4l-4 4l-4 -4zM227.5 384.5l4 4l-4 4l-4 -4zM231.5 384.5l4 4l-4 4l-4 -4zM233.5 383.5l4 4l-4 4l-4 -4zM235.5 385.5l4 4l-4 4l-4 -4zM238.5 382.5l4 4l-4 4l-4 -4zM241.5 383.5l4 4l-4 4l-4 -4zM243.5 384.5l4 4l-4 4l-4 -4zM246.5 383.5l4 4l-4 4l-4 -4zM248.5 384.5l4 4l-4 4l-4 -4zM251.5 382.5l4 4l-4 4l-4 -4zM254.5 385.5l4 4l-4 4l-4 -4zM255.5 382.5l4 4l-4 4l-4 -4zM259.5 383.5l4 4l-4 4l-4 -4zM261.5 383.5l4 4l-4 4l-4 -4zM264.5 383.5l4 4l-4 4l-4 -4zM267.5 385.5l4 4l-4 4l-4 -4zM271.5 381.5l4 4l-4 4l-4 -4zM274.5 384.5l4 4l-4 4l-4 -4zM278.5 384.5l4 4l-4 4l-4 -4zM281.5 383.5l4 4l-4 4l-4 -4zM284.5 382.5l4 4l-4 4l-4 -4zM288.5 384.5l4 4l-4 4l-4 -4zM292.5 384.5l4 4l-4 4l-4 -4zM294.5 384.5l4 4l-4 4l-4 -4zM298.5 383.5l4 4l-4 4l-4 -4zM301.5 383.5l4 4l-4 4l-4 -4zM304.5 383.5l4 4l-4 4l-4 -4zM306.5 383.5l4 4l-4 4l-4 -4zM309.5 385.5l4 4l-4 4l-4 -4zM312.5 383.5l4 4l-4 4l-4 -4zM314.5 383.5l4 4l-4 4l-4 -4zM317.5 382.5l4 4l-4 4l-4 -4zM319.5 385.5l4 4l-4 4l-4 -4zM322.5 383.5l4 4l-4 4l-4 -4zM325.5 383.5l4 4l-4 4l-4 -4zM327.5 382.5l4 4l-4 4l-4 -4zM329.5 383.5l4 4l-4 4l-4 -4zM333.5 384.5l4 4l-4 4l-4 -4zM337.5 383.5l4 4l-4 4l-4 -4zM341.5 384.5l4 4l-4 4l-4 -4zM343.5 383.5l4 4l-4 4l-4 -4zM346.5 386.5l4 4l-4 4l-4 -4zM349.5 385.5l4 4l-4 4l-4 -4zM352.5 385.5l4 4l-4 4l-4 -4zM354.5 384.5l4 4l-4 4l-4 -4zM358.5 383.5l4 4l-4 4l-4 -4zM360.5 382.5l4 4l-4 4l-4 -4zM362.5 383.5l4 4l-4 4l-4 -4zM366.5 383.5l4 4l-4 4l-4 -4zM368.5 383.5l4 4l-4 4l-4 -4z" stroke="#000080" stroke-width="1" fill="none" shape-rendering="crispEdges"/>
<path d="M62.5 397.5a4 4 0 1 0 0.1 0M64.5 397.5a4 4 0 1 0 0.1 0M67.5 396.5a4 4 0 1 0 0.1 0M68.5 397.5a4 4 0 1 0 0.1 0M71.5 395.5a4 4 0 1 0 0.1 0M73.5 394.5a4 4 0 1 0 0.1 0M75.5 397.5a4 4 0 1 0 0.1 0M78.5 397.5a4 4 0 1 0 0.1 0M80.5 395.5a4 4 0 1 0 0.1 0M82.5 396.5a4 4 0 1 0 0.1 0M85.5 396.5a4 4 0 1 0 0.1 0M87.5 394.5a4 4 0 1 0 0.1 0M89.5 393.5a4 4 0 1 0 0.1 0M91.5 395.5a4 4 0 1 0 0.1 0M94.5 395.5a4 4 0 1 0 0.1 0M95.5 395.5a4 4 0 1 0 0.1 0M97.5 397.5a4 4 0 1 0 0.1 0M99.5 397.5a4 4 0 1 0 0.1 0M101.5 395.5a4 4 0 1 0 0.1 0M103.5 394.5a4 4 0 1 0 0.1 0M105.5 394.5a4 4 0 1 0 0.1 0M107.5 396.5a4 4 0 1 0 0.1 0M108.5 396.5a4 4 0 1 0 0.1 0M110.5 395.5a4 4 0 1 0 0.1 0M113.5 395.5a4 4 0 1 0 0.1 0M115.5 395.5a4 4 0 1 0 0.1 0M117.5 396.5a4 4 0 1 0 0.1 0M119.5 396.5a4 4 0 1 0 0.1 0M122.5 396.5a4 4 0 1 0 0.1 0M124.5 396.5a4 4 0 1 0 0.1 0M127.5 395.5a4 4 0 1 0 0.1 0M129.4 395.5a4 4 0 1 0 0.1 0M132.4 394.5a4 4 0 1 0 0.1 0M134.4 395.5a4 4 0 1 0 0.1 0M136.4 396.5a4 4 0 1 0 0.1 0M138.4 397.5a4 4 0 1 0 0.1 0M140.4 397.5a4 4 0 1 0 0.1 0M142.4 394.5a4 4 0 1 0 0.1 0M143.4 394.5a4 4 0 1 0 0.1 0M145.4 396.5a4 4 0 1 0 0.1 0M147.4 397.5a4 4 0 1 0 0.1 0M149.4 394.5a4 4 0 1 0 0.1 0M151.4 397.5a4 4 0 1 0 0.1 0M154.4 395.5a4 4 0 1 0 0.1 0M155.4 397.5a4 4 0 1 0 0.1 0M157.4 398.5a4 4 0 1 0 0.1 0M160.4 397.5a4 4 0 1 0 0.1 0M162.4 397.5a4 4 0 1 0 0.1 0M164.4 395.5a4 4 0 1 0 0.1 0M167.4 395.5a4 4 0 1 0 0.1 0M170.4 394.5a4 4 0 1 0 0.1 0M172.4 396.5a4 4 0 1 0 0.1 0M175.4 394.5a4 4 0 1 0 0.1 0M178.4 396.5a4 4 0 1 0 0.1 0M181.4 398.5a4 4 0 1 0 0.1 0M183.4 395.5a4 4 0 1 0 0.1 0M185.4 395.5a4 4 0 1 0 0.1 0M187.4 395.5a4 4 0 1 0 0.1 0M189.4 397.5a4 4 0 1 0 0.1 0M191.4 395.5a4 4 0 1 0 0.1 0M195.4 395.5a4 4 0 1 0 0.1 0M197.4 394.5a4 4 0 1 0 0.1 0M200.4 397.5a4 4 0 1 0 0.1 0M202.4 396.5a4 4 0 1 0 0.1 0M205.4 394.5a4 4 0 1 0 0.1 0M207.4 395.5a4 4 0 1 0 0.1 0M210.4 394.5a4 4 0 1 0 0.1 0M213.4 396.5a4 4 0 1 0 0.1 0M215.4 395.5a4 4 0 1 0 0.1 0M218.4 394.5a4 4 0 1 0 0.1 0M221.4 394.5a4 4 0 1 0 0.1 0M224.4 396.5a4 4 0 1 0 0.1 0M225.4 396.5a4 4 0 1 0 0.1 0M228.4 394.5a4 4 0 1 0 0.1 0M230.4 393.5a4 4 0 1 0 0.1 0M233.4 393.5a4 4 0 1 0 0.1 0M236.4 394.5a4 4 0 1 0 0.1 0M239.4 393.5a4 4 0 1 0 0.1 0M241.4 396.5a4 4 0 1 0 0.1 0M242.4 394.5a4 4 0 1 0 0.1 0M245.4 396.5a4 4 0 1 0 0.1 0M248.4 397.5a4 4 0 1 0 0.1 0M250.4 394.5a4 4 0 1 0 0.1 0M252.4 396.5a4 4 0 1 0 0.1 0M254.4 395.5a4 4 0 1 0 0.1 0M256.4 395.5a4 4 0 1 0 0.1 0M257.4 394.5a4 4 0 1 0 0.1 0M260.4 395.5a4 4 0 1 0 0.1 0M263.4 394.5a4 4 0 1 0 0.1 0M266.4 394.5a4 4 0 1 0 0.1 0M268.4 394.5a4 4 0 1 0 0.1 0M271.4 394.5a4 4 0 1 0 0.1 0M273.4 396.5a4 4 0 1 0 0.1 0M275.4 395.5a4 4 0 1 0 0.1 0M277.4 398.5a4 4 0 1 0 0.1 0M279.4 395.5a4 4 0 1 0 0.1 0M282.4 398.5a4 4 0 1 0 0.1 0M285.4 395.5a4 4 0 1 0 0.1 0M287.4 395.5a4 4 0 1 0 0.1 0M288.4 394.5a4 4 0 1 0 0.1 0M291.4 396.5a4 4 0 1 0 0.1 0M293.4 396.5a4 4 0 1 0 0.1 0M294.4 397.5a4 4 0 1 0 0.1 0M297.4 396.5a4 4 0 1 0 0.1 0M299.4 397.5a4 4 0 1 0 0.1 0M303.4 397.5a4 4 0 1 0 0.1 0M305.4 395.5a4 4 0 1 0 0.1 0M307.4 396.5a4 4 0 1 0 0.1 0M310.4 395.5a4 4 0 1 0 0.1 0M313.4 395.5a4 4 0 1 0 0.1 0M314.4 398.5a4 4 0 1 0 0.1 0M316.4 396.5a4 4 0 1 0 0.1 0M319.4 395.5a4 4 0 1 0 0.1 0M321.4 395.5a4 4 0 1 0 0.1 0M323.4 394.5a4 4 0 1 0 0.1 0M325.4 397.5a4 4 0 1 0 0.1 0M327.4 397.5a4 4 0 1 0 0.1 0M329.4 396.5a4 4 0 1 0 0.1 0M331.4 396.5a4 4 0 1 0 0.1 0M333.4 394.5a4 4 0 1 0 0.1 0M336.4 393.5a4 4 0 1 0 0.1 0M339.4 396.5a4 4 0 1 0 0.1 0M341.4 395.5a4 4 0 1 0 0.1 0M345.4 394.5a4 4 0 1 0 0.1 0M347.4 396.5a4 4 0 1 0 0.1 0M349.4 396.5a4 4 0 1 0 0.1 0M351.4 395.5a4 4 0 1 0 0.1 0M354.4 396.5a4 4 0 1 0 0.1 0M356.4 395.5a4 4 0 1 0 0.1 0M358.4 394.5a4 4 0 1 0 0.1 0M361.4 394.5a4 4 0 1 0 0.1 0M364.4 395.5a4 4 0 1 0 0.1 0M367.4 395.5a4 4 0 1 0 0.1 0M369.4 394.5a4 4 0 1 0 0.1 0M370.4 397.5a4 4 0 1 0 0.1 0" stroke="#800000" stroke-width="1" fill="none" shape-rendering="crispEdges"/>
<text x="251.8" y="477.3" font-family="Liberation Sans" font-weight="bold" font-size="19" fill="#000" textLength="53.5" lengthAdjust="spacingAndGlyphs">EQ Ori</text>
<defs><radialGradient id="sg"><stop offset="0" stop-color="#fff"/><stop offset="0.62" stop-color="#fff"/><stop offset="0.8" stop-color="#fff" stop-opacity="0.3"/><stop offset="1" stop-color="#fff" stop-opacity="0"/></radialGradient><radialGradient id="sf"><stop offset="0" stop-color="#fff" stop-opacity="0.8"/><stop offset="0.4" stop-color="#fff" stop-opacity="0.55"/><stop offset="1" stop-color="#fff" stop-opacity="0"/></radialGradient><filter id="noise" x="0" y="0" width="100%" height="100%" color-interpolation-filters="sRGB"><feTurbulence type="fractalNoise" baseFrequency="1.6" numOctaves="1" seed="3"/><feColorMatrix type="matrix" values="0.5 0 0 0 -0.164  0.5 0 0 0 -0.164  0.5 0 0 0 -0.164  0 0 0 0 1"/></filter></defs>
<rect x="404" y="33" width="765" height="510" filter="url(#noise)"/>
<circle cx="541.6" cy="92" r="7.4" fill="url(#sg)"/>
<circle cx="618.3" cy="78.6" r="6.2" fill="url(#sg)"/>
<circle cx="536.2" cy="172.8" r="7.4" fill="url(#sg)"/>
<circle cx="789.3" cy="169.7" r="7.4" fill="url(#sg)"/>
<circle cx="767.3" cy="212.7" r="7.4" fill="url(#sg)"/>
<circle cx="692.6" cy="227.7" r="6.1" fill="url(#sg)"/>
<circle cx="1149" cy="83.5" r="6.1" fill="url(#sg)"/>
<circle cx="821.6" cy="268.3" r="5.1" fill="url(#sg)"/>
<circle cx="909.6" cy="286.3" r="6.8" fill="url(#sg)"/>
<circle cx="988" cy="309.4" r="5.1" fill="url(#sg)"/>
<circle cx="553.7" cy="346.5" r="6.1" fill="url(#sg)"/>
<circle cx="726.3" cy="318" r="6.2" fill="url(#sg)"/>
<circle cx="730" cy="399.8" r="6.8" fill="url(#sg)"/>
<circle cx="694" cy="460.8" r="6.1" fill="url(#sg)"/>
<circle cx="856" cy="392.6" r="5.1" fill="url(#sg)"/>
<circle cx="874.3" cy="421.5" r="4.7" fill="url(#sg)"/>
<circle cx="1080.2" cy="459.2" r="6.8" fill="url(#sg)"/>
<circle cx="941.8" cy="501.5" r="8.1" fill="url(#sg)"/>
<circle cx="888" cy="510" r="4.2" fill="url(#sf)"/>
<circle cx="808" cy="182" r="3.6" fill="url(#sf)"/>
<circle cx="411.5" cy="263.5" r="3.6" fill="url(#sf)"/>
<circle cx="551.5" cy="262.7" r="3.6" fill="url(#sf)"/>
<circle cx="702" cy="260.5" r="3.4" fill="url(#sf)"/>
<circle cx="1092" cy="190" r="3.4" fill="url(#sf)"/>
<circle cx="488.8" cy="505" r="3.4" fill="url(#sf)"/>
<circle cx="677.4" cy="491.3" r="3.1" fill="url(#sf)"/>
<circle cx="676.3" cy="514.6" r="3.1" fill="url(#sf)"/>
<circle cx="895.8" cy="286.3" r="3.4" fill="url(#sf)"/>
<circle cx="1020.3" cy="402.6" r="3.1" fill="url(#sf)"/>
<circle cx="552.6" cy="316.6" r="3.1" fill="url(#sf)"/>
<circle cx="735.6" cy="427" r="2.9" fill="url(#sf)"/>
<circle cx="777" cy="368.7" r="2.9" fill="url(#sf)"/>
<circle cx="1042.5" cy="59" r="3.4" fill="url(#sf)" opacity="0.32"/>
<circle cx="1094.6" cy="67" r="3.4" fill="url(#sf)" opacity="0.32"/>
<circle cx="903" cy="44" r="3.4" fill="url(#sf)" opacity="0.32"/>
<circle cx="862.8" cy="115" r="3.4" fill="url(#sf)" opacity="0.32"/>
<circle cx="1021" cy="163" r="3.4" fill="url(#sf)" opacity="0.32"/>
<circle cx="900.6" cy="225" r="3.4" fill="url(#sf)" opacity="0.32"/>
<circle cx="1142" cy="270" r="3.4" fill="url(#sf)" opacity="0.32"/>
<circle cx="1023.6" cy="75" r="3.4" fill="url(#sf)" opacity="0.32"/>
<circle cx="738.5" cy="68.7" r="3.4" fill="url(#sf)" opacity="0.32"/>
<circle cx="651.9" cy="171.7" r="3.4" fill="url(#sf)" opacity="0.32"/>
<circle cx="715.3" cy="191.5" r="3.4" fill="url(#sf)" opacity="0.32"/>
<circle cx="503" cy="173.3" r="3.4" fill="url(#sf)" opacity="0.32"/>
<circle cx="651.7" cy="171.5" r="3.4" fill="url(#sf)" opacity="0.32"/>
<circle cx="468.5" cy="220.8" r="3.4" fill="url(#sf)" opacity="0.32"/>
<circle cx="580" cy="251.5" r="3.4" fill="url(#sf)" opacity="0.32"/>
<circle cx="579" cy="251" r="3.4" fill="url(#sf)" opacity="0.32"/>
<circle cx="632" cy="319" r="3.4" fill="url(#sf)" opacity="0.32"/>
<circle cx="419.4" cy="341" r="3.4" fill="url(#sf)" opacity="0.32"/>
<circle cx="766" cy="417.5" r="3.4" fill="url(#sf)" opacity="0.32"/>
<circle cx="749.5" cy="525.7" r="3.4" fill="url(#sf)" opacity="0.32"/>
<circle cx="436" cy="367.6" r="3.4" fill="url(#sf)" opacity="0.32"/>
<circle cx="527.6" cy="414.7" r="3.4" fill="url(#sf)" opacity="0.32"/>
<circle cx="455.5" cy="295.5" r="3.4" fill="url(#sf)" opacity="0.32"/>
<circle cx="563.7" cy="489.7" r="3.4" fill="url(#sf)" opacity="0.32"/>
<circle cx="1141.8" cy="269.4" r="3.4" fill="url(#sf)" opacity="0.32"/>
<circle cx="830" cy="290" r="3.4" fill="url(#sf)" opacity="0.32"/>
<circle cx="841" cy="488" r="3.4" fill="url(#sf)" opacity="0.32"/>
<circle cx="888" cy="353.8" r="3.4" fill="url(#sf)" opacity="0.32"/>
<circle cx="1147" cy="384" r="3.4" fill="url(#sf)" opacity="0.32"/>
<circle cx="423" cy="52" r="3.4" fill="url(#sf)" opacity="0.32"/>
<g fill="none" stroke="#00c800" stroke-width="1" shape-rendering="crispEdges"><circle cx="541.6" cy="92" r="10.2"/><circle cx="541.6" cy="92" r="18.2"/><circle cx="541.6" cy="92" r="26.3"/></g>
<text x="556.5" y="128.5" fill="#00c800" font-family="Liberation Sans" font-size="16" textLength="31.8" lengthAdjust="spacingAndGlyphs">Ref2</text>
<g fill="none" stroke="#00c800" stroke-width="1" shape-rendering="crispEdges"><circle cx="536.2" cy="172.8" r="10.2"/><circle cx="536.2" cy="172.8" r="18.2"/><circle cx="536.2" cy="172.8" r="26.3"/></g>
<text x="551.5" y="211" fill="#00c800" font-family="Liberation Sans" font-size="16" textLength="31.8" lengthAdjust="spacingAndGlyphs">Ref1</text>
<g fill="none" stroke="#00c800" stroke-width="1" shape-rendering="crispEdges"><circle cx="789.3" cy="169.7" r="10.2"/><circle cx="789.3" cy="169.7" r="18.2"/><circle cx="789.3" cy="169.7" r="26.3"/></g>
<text x="741.5" y="206" fill="#00c800" font-family="Liberation Sans" font-size="16" textLength="31.8" lengthAdjust="spacingAndGlyphs">Ref3</text>
<g fill="none" stroke="#00c800" stroke-width="1" shape-rendering="crispEdges"><circle cx="767.3" cy="212.7" r="10.2"/><circle cx="767.3" cy="212.7" r="18.2"/><circle cx="767.3" cy="212.7" r="26.3"/></g>
<text x="782.5" y="249.5" fill="#00c800" font-family="Liberation Sans" font-size="16" textLength="31.8" lengthAdjust="spacingAndGlyphs">Ref4</text>
<g fill="none" stroke="#00c800" stroke-width="1" shape-rendering="crispEdges"><circle cx="726.3" cy="318.3" r="10.2"/><circle cx="726.3" cy="318.3" r="18.2"/><circle cx="726.3" cy="318.3" r="26.3"/></g>
<text x="739.5" y="291.5" fill="#00c800" font-family="Liberation Sans" font-size="16" textLength="35.1" lengthAdjust="spacingAndGlyphs">Chk1</text>
<g fill="none" stroke="#00c800" stroke-width="1" shape-rendering="crispEdges"><circle cx="730" cy="399.8" r="10.2"/><circle cx="730" cy="399.8" r="18.2"/><circle cx="730" cy="399.8" r="26.3"/></g>
<text x="744" y="373" fill="#00c800" font-family="Liberation Sans" font-size="16" textLength="35.1" lengthAdjust="spacingAndGlyphs">Chk2</text>
<g fill="none" stroke="#88f080" stroke-width="1" shape-rendering="crispEdges"><circle cx="909.6" cy="286.3" r="10.2"/><circle cx="909.6" cy="286.3" r="18.2"/><circle cx="909.6" cy="286.3" r="26.3"/></g>
<text x="861.5" y="322.7" fill="#88f080" font-family="Liberation Sans" font-size="16" textLength="31.8" lengthAdjust="spacingAndGlyphs">Obj1</text>
<g fill="none" stroke="#00c800" stroke-width="1" shape-rendering="crispEdges"><circle cx="1080.2" cy="459.2" r="10.2"/><circle cx="1080.2" cy="459.2" r="18.2"/><circle cx="1080.2" cy="459.2" r="26.3"/></g>
<text x="1029.8" y="433" fill="#00c800" font-family="Liberation Sans" font-size="16" textLength="35.1" lengthAdjust="spacingAndGlyphs">Chk3</text>
<g fill="none" stroke="#00c800" stroke-width="1" shape-rendering="crispEdges"><circle cx="941.8" cy="501.5" r="10.2"/><circle cx="941.8" cy="501.5" r="18.2"/><circle cx="941.8" cy="501.5" r="26.3"/></g>
<text x="893.8" y="476" fill="#00c800" font-family="Liberation Sans" font-size="16" textLength="31.8" lengthAdjust="spacingAndGlyphs">Ref5</text>
</svg>
<!-- left icon -->
<svg width="18" height="16" style="left:0;top:9px">
<rect x="1" y="2" width="15" height="12" fill="#fff"/>
<rect x="1" y="1" width="15" height="2" fill="#2a6ad8"/>
<rect x="13" y="1" width="2" height="1" fill="#f08030"/>
<rect x="1" y="14" width="16" height="1" fill="#1a3a90" opacity="0.7"/>
<rect x="16" y="2" width="1" height="13" fill="#1a3a90" opacity="0.7"/>
</svg>
<div class="abs" style="left:20px;top:10px;color:#fff;font-weight:bold;font-size:14px;line-height:16px;letter-spacing:-0.5px;text-shadow:1px 1px 0 #1a306a">Photometry</div>
<!-- right icon -->
<svg width="16" height="18" style="left:404px;top:8px">
<path d="M1.5 1.5H10.5L14.5 5.5V16.5H1.5Z" fill="#108c84" stroke="#000" stroke-width="1.2"/>
<path d="M10.5 1.5V5.5H14.5Z" fill="#d8d0d0" stroke="#000" stroke-width="0.8"/>
<path d="M4.5 5L11.5 12" stroke="#fff" stroke-width="3.2" stroke-linecap="square"/>
<path d="M6 12.5L7.5 15.5M8.5 12.5L8.5 15.5M9.5 13L11 15.5" stroke="#022" stroke-width="1.3"/>
</svg>
<div class="abs" style="left:423px;top:10px;color:#fff;font-weight:bold;font-size:14px;line-height:16px;letter-spacing:-0.25px">Photometry - EQ Ori-20081229-S001-R001-C134-Clear.fts</div>
<!-- left buttons -->
<div class="tb" style="left:349px;top:7px;border:1px solid rgba(215,230,255,0.6);background:linear-gradient(#6a9ee6,#5a92e2 45%,#3a7ad6 50%,#3272d0 80%,#5a8ad8)"></div>
<svg width="20" height="20" style="left:349px;top:7px"><path d="M6.9 7.4C6.9 5.2 8.4 4.1 10.4 4.1C12.6 4.1 13.9 5.4 13.9 7.2C13.9 9 12.6 9.7 11.6 10.4C10.7 11 10.3 11.6 10.3 13" fill="none" stroke="#fff" stroke-width="2"/><rect x="9.1" y="14.6" width="2.3" height="2.3" fill="#fff"/></svg>
<div class="tb" style="left:372px;top:7px;border:1px solid rgba(255,215,200,0.65);background:linear-gradient(#e0907c,#dc7c64 45%,#d84c1e 50%,#d85828 80%,#ec8a6a)"></div>
<svg width="20" height="20" style="left:372px;top:7px"><path d="M5 5L15 15M15 5L5 15" stroke="#fff" stroke-width="2"/></svg>
<!-- right buttons -->
<div class="tb" style="left:1102px;top:8px;border:1px solid #3d64bd;background:linear-gradient(#6e9cdc,#5a8ed6 45%,#4280d4 50%,#5a96dc 80%,#88bcec)"></div>
<svg width="20" height="20" style="left:1102px;top:8px"><rect x="4.5" y="12" width="8" height="3" fill="#fff"/></svg>
<div class="tb" style="left:1125px;top:8px;border:1px solid #3d64bd;background:linear-gradient(#6e9cdc,#5a8ed6 45%,#4280d4 50%,#5a96dc 80%,#88bcec)"></div>
<svg width="20" height="20" style="left:1125px;top:8px"><rect x="5.5" y="5.5" width="10" height="9" fill="none" stroke="#fff" stroke-width="1"/><rect x="5" y="5" width="11" height="3" fill="#fff"/></svg>
<div class="tb" style="left:1148px;top:8px;border:1px solid #3d64bd;background:linear-gradient(#6e9cdc,#5a8ed6 45%,#4280d4 50%,#5a96dc 80%,#88bcec)"></div>
<svg width="20" height="20" style="left:1148px;top:8px"><path d="M5 4.5L15.5 15M15.5 4.5L5 15" stroke="#fff" stroke-width="2"/></svg>
</body></html>
